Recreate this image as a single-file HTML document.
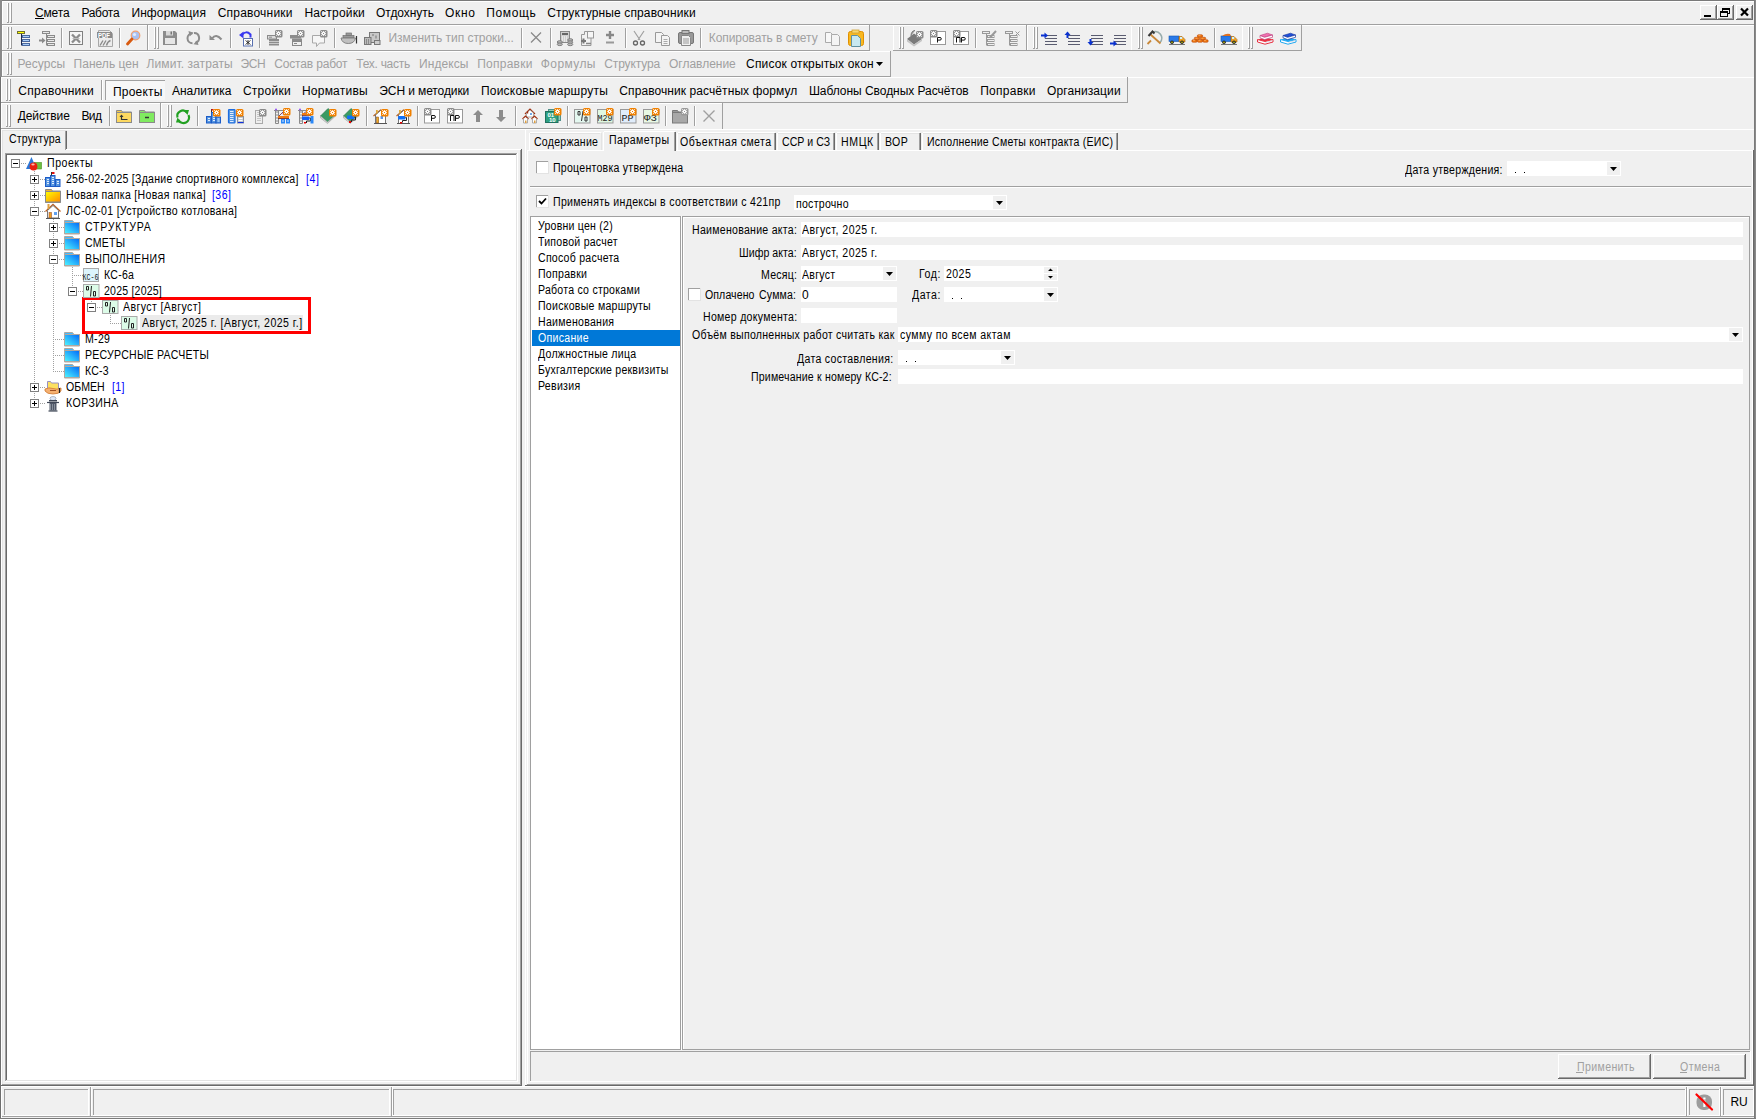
<!DOCTYPE html>
<html><head><meta charset="utf-8"><style>
html,body{margin:0;padding:0;}
body{width:1756px;height:1119px;position:relative;overflow:hidden;background:#f0f0f0;font-family:"Liberation Sans",sans-serif;}
body>div,body>span,body>svg{position:absolute;}
span{white-space:pre;line-height:1;}
</style></head><body>
<div style="left:0px;top:0px;width:1756px;height:1px;background:#7a7a7a;"></div>
<div style="left:0px;top:0px;width:2px;height:77px;background:#8a8a8a;"></div>
<div style="left:0px;top:77px;width:1px;height:1042px;background:#6e6e6e;"></div>
<div style="left:1px;top:77px;width:1px;height:1041px;background:#ffffff;"></div>
<div style="left:1754px;top:0px;width:1px;height:1119px;background:#7a7a7a;"></div>
<div style="left:1755px;top:0px;width:1px;height:1119px;background:#8a8a8a;"></div>
<div style="left:2px;top:1px;width:1752px;height:1px;background:#ffffff;"></div>
<div style="left:2px;top:1px;width:1px;height:76px;background:#ffffff;"></div>
<div style="left:0px;top:1118px;width:1756px;height:1px;background:#7a7a7a;"></div>
<div style="left:7px;top:3px;width:1px;height:19px;background:#ffffff;"></div>
<div style="left:8px;top:3px;width:1px;height:20px;background:#a0a0a0;"></div>
<div style="left:7px;top:22px;width:1px;height:1px;background:#a0a0a0;"></div>
<div style="left:10px;top:3px;width:1px;height:19px;background:#ffffff;"></div>
<div style="left:11px;top:3px;width:1px;height:20px;background:#a0a0a0;"></div>
<div style="left:10px;top:22px;width:1px;height:1px;background:#a0a0a0;"></div>
<div style="left:35px;top:18px;width:9px;height:1px;background:#000;"></div>
<div style="left:1700px;top:5px;width:17px;height:15px;background:#f0f0f0;"></div>
<div style="left:1700px;top:5px;width:17px;height:1px;background:#ffffff;"></div>
<div style="left:1700px;top:5px;width:1px;height:15px;background:#ffffff;"></div>
<div style="left:1700px;top:19px;width:17px;height:1px;background:#696969;"></div>
<div style="left:1716px;top:5px;width:1px;height:15px;background:#696969;"></div>
<div style="left:1701px;top:18px;width:15px;height:1px;background:#a0a0a0;"></div>
<div style="left:1715px;top:6px;width:1px;height:13px;background:#a0a0a0;"></div>
<div style="left:1717px;top:5px;width:17px;height:15px;background:#f0f0f0;"></div>
<div style="left:1717px;top:5px;width:17px;height:1px;background:#ffffff;"></div>
<div style="left:1717px;top:5px;width:1px;height:15px;background:#ffffff;"></div>
<div style="left:1717px;top:19px;width:17px;height:1px;background:#696969;"></div>
<div style="left:1733px;top:5px;width:1px;height:15px;background:#696969;"></div>
<div style="left:1718px;top:18px;width:15px;height:1px;background:#a0a0a0;"></div>
<div style="left:1732px;top:6px;width:1px;height:13px;background:#a0a0a0;"></div>
<div style="left:1736px;top:5px;width:17px;height:15px;background:#f0f0f0;"></div>
<div style="left:1736px;top:5px;width:17px;height:1px;background:#ffffff;"></div>
<div style="left:1736px;top:5px;width:1px;height:15px;background:#ffffff;"></div>
<div style="left:1736px;top:19px;width:17px;height:1px;background:#696969;"></div>
<div style="left:1752px;top:5px;width:1px;height:15px;background:#696969;"></div>
<div style="left:1737px;top:18px;width:15px;height:1px;background:#a0a0a0;"></div>
<div style="left:1751px;top:6px;width:1px;height:13px;background:#a0a0a0;"></div>
<div style="left:1704px;top:15px;width:7px;height:2px;background:#000;"></div>
<div style="left:1722px;top:8px;width:8px;height:6px;box-sizing:border-box;border:1px solid #000;border-top-width:2px"></div>
<div style="left:1720px;top:11px;width:8px;height:6px;box-sizing:border-box;border:1px solid #000;border-top-width:2px;background:#f0f0f0"></div>
<svg style="left:1739px;top:7px" width="11" height="10"><path d="M2 1.5l7 7M9 1.5l-7 7" stroke="#000" stroke-width="2.2"/></svg>
<div style="left:2px;top:24px;width:1752px;height:1px;background:#a0a0a0;"></div>
<div style="left:2px;top:25px;width:1752px;height:1px;background:#ffffff;"></div>
<div style="left:2px;top:25px;width:146px;height:1px;background:#ffffff;"></div>
<div style="left:2px;top:25px;width:1px;height:26px;background:#ffffff;"></div>
<div style="left:2px;top:50px;width:146px;height:1px;background:#a0a0a0;"></div>
<div style="left:147px;top:25px;width:1px;height:26px;background:#a0a0a0;"></div>
<div style="left:148px;top:25px;width:722px;height:1px;background:#ffffff;"></div>
<div style="left:148px;top:25px;width:1px;height:26px;background:#ffffff;"></div>
<div style="left:148px;top:50px;width:722px;height:1px;background:#a0a0a0;"></div>
<div style="left:869px;top:25px;width:1px;height:26px;background:#a0a0a0;"></div>
<div style="left:893px;top:25px;width:134px;height:1px;background:#ffffff;"></div>
<div style="left:893px;top:25px;width:1px;height:26px;background:#ffffff;"></div>
<div style="left:893px;top:50px;width:134px;height:1px;background:#a0a0a0;"></div>
<div style="left:1026px;top:25px;width:1px;height:26px;background:#a0a0a0;"></div>
<div style="left:1027px;top:25px;width:105px;height:1px;background:#ffffff;"></div>
<div style="left:1027px;top:25px;width:1px;height:26px;background:#ffffff;"></div>
<div style="left:1027px;top:50px;width:105px;height:1px;background:#a0a0a0;"></div>
<div style="left:1131px;top:25px;width:1px;height:26px;background:#a0a0a0;"></div>
<div style="left:1131px;top:25px;width:112px;height:1px;background:#ffffff;"></div>
<div style="left:1131px;top:25px;width:1px;height:26px;background:#ffffff;"></div>
<div style="left:1131px;top:50px;width:112px;height:1px;background:#a0a0a0;"></div>
<div style="left:1242px;top:25px;width:1px;height:26px;background:#a0a0a0;"></div>
<div style="left:1242px;top:25px;width:60px;height:1px;background:#ffffff;"></div>
<div style="left:1242px;top:25px;width:1px;height:26px;background:#ffffff;"></div>
<div style="left:1242px;top:50px;width:60px;height:1px;background:#a0a0a0;"></div>
<div style="left:1301px;top:25px;width:1px;height:26px;background:#a0a0a0;"></div>
<div style="left:7px;top:27px;width:1px;height:21px;background:#ffffff;"></div>
<div style="left:8px;top:27px;width:1px;height:22px;background:#a0a0a0;"></div>
<div style="left:7px;top:48px;width:1px;height:1px;background:#a0a0a0;"></div>
<div style="left:10px;top:27px;width:1px;height:21px;background:#ffffff;"></div>
<div style="left:11px;top:27px;width:1px;height:22px;background:#a0a0a0;"></div>
<div style="left:10px;top:48px;width:1px;height:1px;background:#a0a0a0;"></div>
<div style="left:154px;top:27px;width:1px;height:21px;background:#ffffff;"></div>
<div style="left:155px;top:27px;width:1px;height:22px;background:#a0a0a0;"></div>
<div style="left:154px;top:48px;width:1px;height:1px;background:#a0a0a0;"></div>
<div style="left:157px;top:27px;width:1px;height:21px;background:#ffffff;"></div>
<div style="left:158px;top:27px;width:1px;height:22px;background:#a0a0a0;"></div>
<div style="left:157px;top:48px;width:1px;height:1px;background:#a0a0a0;"></div>
<div style="left:899px;top:27px;width:1px;height:21px;background:#ffffff;"></div>
<div style="left:900px;top:27px;width:1px;height:22px;background:#a0a0a0;"></div>
<div style="left:899px;top:48px;width:1px;height:1px;background:#a0a0a0;"></div>
<div style="left:902px;top:27px;width:1px;height:21px;background:#ffffff;"></div>
<div style="left:903px;top:27px;width:1px;height:22px;background:#a0a0a0;"></div>
<div style="left:902px;top:48px;width:1px;height:1px;background:#a0a0a0;"></div>
<div style="left:1033px;top:27px;width:1px;height:21px;background:#ffffff;"></div>
<div style="left:1034px;top:27px;width:1px;height:22px;background:#a0a0a0;"></div>
<div style="left:1033px;top:48px;width:1px;height:1px;background:#a0a0a0;"></div>
<div style="left:1036px;top:27px;width:1px;height:21px;background:#ffffff;"></div>
<div style="left:1037px;top:27px;width:1px;height:22px;background:#a0a0a0;"></div>
<div style="left:1036px;top:48px;width:1px;height:1px;background:#a0a0a0;"></div>
<div style="left:1138px;top:27px;width:1px;height:21px;background:#ffffff;"></div>
<div style="left:1139px;top:27px;width:1px;height:22px;background:#a0a0a0;"></div>
<div style="left:1138px;top:48px;width:1px;height:1px;background:#a0a0a0;"></div>
<div style="left:1141px;top:27px;width:1px;height:21px;background:#ffffff;"></div>
<div style="left:1142px;top:27px;width:1px;height:22px;background:#a0a0a0;"></div>
<div style="left:1141px;top:48px;width:1px;height:1px;background:#a0a0a0;"></div>
<div style="left:1248px;top:27px;width:1px;height:21px;background:#ffffff;"></div>
<div style="left:1249px;top:27px;width:1px;height:22px;background:#a0a0a0;"></div>
<div style="left:1248px;top:48px;width:1px;height:1px;background:#a0a0a0;"></div>
<div style="left:1251px;top:27px;width:1px;height:21px;background:#ffffff;"></div>
<div style="left:1252px;top:27px;width:1px;height:22px;background:#a0a0a0;"></div>
<div style="left:1251px;top:48px;width:1px;height:1px;background:#a0a0a0;"></div>
<div style="left:2px;top:51px;width:889px;height:1px;background:#ffffff;"></div>
<div style="left:2px;top:51px;width:1px;height:26px;background:#ffffff;"></div>
<div style="left:2px;top:76px;width:889px;height:1px;background:#a0a0a0;"></div>
<div style="left:890px;top:51px;width:1px;height:26px;background:#a0a0a0;"></div>
<div style="left:7px;top:53px;width:1px;height:21px;background:#ffffff;"></div>
<div style="left:8px;top:53px;width:1px;height:22px;background:#a0a0a0;"></div>
<div style="left:7px;top:74px;width:1px;height:1px;background:#a0a0a0;"></div>
<div style="left:10px;top:53px;width:1px;height:21px;background:#ffffff;"></div>
<div style="left:11px;top:53px;width:1px;height:22px;background:#a0a0a0;"></div>
<div style="left:10px;top:74px;width:1px;height:1px;background:#a0a0a0;"></div>
<div style="left:1px;top:77px;width:1753px;height:1px;background:#ffffff;"></div>
<div style="left:1px;top:77px;width:1px;height:26px;background:#ffffff;"></div>
<div style="left:1px;top:102px;width:1127px;height:1px;background:#a0a0a0;"></div>
<div style="left:1127px;top:77px;width:1px;height:26px;background:#a0a0a0;"></div>
<div style="left:6px;top:79px;width:1px;height:21px;background:#ffffff;"></div>
<div style="left:7px;top:79px;width:1px;height:22px;background:#a0a0a0;"></div>
<div style="left:6px;top:100px;width:1px;height:1px;background:#a0a0a0;"></div>
<div style="left:9px;top:79px;width:1px;height:21px;background:#ffffff;"></div>
<div style="left:10px;top:79px;width:1px;height:22px;background:#a0a0a0;"></div>
<div style="left:9px;top:100px;width:1px;height:1px;background:#a0a0a0;"></div>
<div style="left:1px;top:103px;width:160px;height:1px;background:#ffffff;"></div>
<div style="left:1px;top:103px;width:1px;height:26px;background:#ffffff;"></div>
<div style="left:1px;top:128px;width:160px;height:1px;background:#a0a0a0;"></div>
<div style="left:160px;top:103px;width:1px;height:26px;background:#a0a0a0;"></div>
<div style="left:161px;top:103px;width:562px;height:1px;background:#ffffff;"></div>
<div style="left:161px;top:103px;width:1px;height:26px;background:#ffffff;"></div>
<div style="left:722px;top:103px;width:1px;height:26px;background:#a0a0a0;"></div>
<div style="left:161px;top:128px;width:493px;height:1px;background:#a0a0a0;"></div>
<div style="left:6px;top:105px;width:1px;height:21px;background:#ffffff;"></div>
<div style="left:7px;top:105px;width:1px;height:22px;background:#a0a0a0;"></div>
<div style="left:6px;top:126px;width:1px;height:1px;background:#a0a0a0;"></div>
<div style="left:9px;top:105px;width:1px;height:21px;background:#ffffff;"></div>
<div style="left:10px;top:105px;width:1px;height:22px;background:#a0a0a0;"></div>
<div style="left:9px;top:126px;width:1px;height:1px;background:#a0a0a0;"></div>
<div style="left:167px;top:105px;width:1px;height:21px;background:#ffffff;"></div>
<div style="left:168px;top:105px;width:1px;height:22px;background:#a0a0a0;"></div>
<div style="left:167px;top:126px;width:1px;height:1px;background:#a0a0a0;"></div>
<div style="left:170px;top:105px;width:1px;height:21px;background:#ffffff;"></div>
<div style="left:171px;top:105px;width:1px;height:22px;background:#a0a0a0;"></div>
<div style="left:170px;top:126px;width:1px;height:1px;background:#a0a0a0;"></div>
<div style="left:2px;top:129px;width:1752px;height:1px;background:#ffffff;"></div>
<div style="left:61px;top:28px;width:1px;height:20px;background:#a0a0a0;"></div>
<div style="left:62px;top:28px;width:1px;height:20px;background:#ffffff;"></div>
<div style="left:90px;top:28px;width:1px;height:20px;background:#a0a0a0;"></div>
<div style="left:91px;top:28px;width:1px;height:20px;background:#ffffff;"></div>
<div style="left:119px;top:28px;width:1px;height:20px;background:#a0a0a0;"></div>
<div style="left:120px;top:28px;width:1px;height:20px;background:#ffffff;"></div>
<div style="left:230px;top:28px;width:1px;height:20px;background:#a0a0a0;"></div>
<div style="left:231px;top:28px;width:1px;height:20px;background:#ffffff;"></div>
<div style="left:259px;top:28px;width:1px;height:20px;background:#a0a0a0;"></div>
<div style="left:260px;top:28px;width:1px;height:20px;background:#ffffff;"></div>
<div style="left:334px;top:28px;width:1px;height:20px;background:#a0a0a0;"></div>
<div style="left:335px;top:28px;width:1px;height:20px;background:#ffffff;"></div>
<div style="left:521px;top:28px;width:1px;height:20px;background:#a0a0a0;"></div>
<div style="left:522px;top:28px;width:1px;height:20px;background:#ffffff;"></div>
<div style="left:550px;top:28px;width:1px;height:20px;background:#a0a0a0;"></div>
<div style="left:551px;top:28px;width:1px;height:20px;background:#ffffff;"></div>
<div style="left:625px;top:28px;width:1px;height:20px;background:#a0a0a0;"></div>
<div style="left:626px;top:28px;width:1px;height:20px;background:#ffffff;"></div>
<div style="left:700px;top:28px;width:1px;height:20px;background:#a0a0a0;"></div>
<div style="left:701px;top:28px;width:1px;height:20px;background:#ffffff;"></div>
<div style="left:975px;top:28px;width:1px;height:20px;background:#a0a0a0;"></div>
<div style="left:976px;top:28px;width:1px;height:20px;background:#ffffff;"></div>
<div style="left:1214px;top:28px;width:1px;height:20px;background:#a0a0a0;"></div>
<div style="left:1215px;top:28px;width:1px;height:20px;background:#ffffff;"></div>
<div style="left:109px;top:106px;width:1px;height:20px;background:#a0a0a0;"></div>
<div style="left:110px;top:106px;width:1px;height:20px;background:#ffffff;"></div>
<div style="left:197px;top:106px;width:1px;height:20px;background:#a0a0a0;"></div>
<div style="left:198px;top:106px;width:1px;height:20px;background:#ffffff;"></div>
<div style="left:366px;top:106px;width:1px;height:20px;background:#a0a0a0;"></div>
<div style="left:367px;top:106px;width:1px;height:20px;background:#ffffff;"></div>
<div style="left:417px;top:106px;width:1px;height:20px;background:#a0a0a0;"></div>
<div style="left:418px;top:106px;width:1px;height:20px;background:#ffffff;"></div>
<div style="left:515px;top:106px;width:1px;height:20px;background:#a0a0a0;"></div>
<div style="left:516px;top:106px;width:1px;height:20px;background:#ffffff;"></div>
<div style="left:567px;top:106px;width:1px;height:20px;background:#a0a0a0;"></div>
<div style="left:568px;top:106px;width:1px;height:20px;background:#ffffff;"></div>
<div style="left:665px;top:106px;width:1px;height:20px;background:#a0a0a0;"></div>
<div style="left:666px;top:106px;width:1px;height:20px;background:#ffffff;"></div>
<div style="left:694px;top:106px;width:1px;height:20px;background:#a0a0a0;"></div>
<div style="left:695px;top:106px;width:1px;height:20px;background:#ffffff;"></div>
<div style="left:101px;top:80px;width:1px;height:20px;background:#a0a0a0;"></div>
<div style="left:102px;top:80px;width:1px;height:20px;background:#ffffff;"></div>
<svg style="left:876px;top:62px" width="8" height="5"><path d="M0 0h7l-3.5 4z" fill="#000"/></svg>
<div style="left:105px;top:80px;width:60px;height:20px;background:#f7f7f7;"></div>
<div style="left:105px;top:80px;width:60px;height:1px;background:#a0a0a0;"></div>
<div style="left:105px;top:80px;width:1px;height:20px;background:#a0a0a0;"></div>
<div style="left:2px;top:130px;width:65px;height:1px;background:#e3e3e3;"></div>
<div style="left:2px;top:131px;width:1px;height:19px;background:#e3e3e3;"></div>
<div style="left:66px;top:131px;width:1px;height:19px;background:#696969;"></div>
<div style="left:65px;top:131px;width:1px;height:19px;background:#a0a0a0;"></div>
<div style="left:66px;top:149px;width:456px;height:1px;background:#ffffff;"></div>
<div style="left:2px;top:150px;width:1px;height:934px;background:#e3e3e3;"></div>
<div style="left:521px;top:149px;width:1px;height:937px;background:#696969;"></div>
<div style="left:520px;top:150px;width:1px;height:935px;background:#a0a0a0;"></div>
<div style="left:1px;top:1085px;width:521px;height:1px;background:#696969;"></div>
<div style="left:2px;top:1084px;width:519px;height:1px;background:#a0a0a0;"></div>
<div style="left:5px;top:153px;width:513px;height:929px;background:#ffffff;"></div>
<div style="left:5px;top:153px;width:513px;height:1px;background:#a0a0a0;"></div>
<div style="left:5px;top:153px;width:1px;height:929px;background:#a0a0a0;"></div>
<div style="left:6px;top:154px;width:511px;height:1px;background:#696969;"></div>
<div style="left:6px;top:154px;width:1px;height:927px;background:#696969;"></div>
<div style="left:5px;top:1081px;width:513px;height:1px;background:#ffffff;"></div>
<div style="left:517px;top:153px;width:1px;height:929px;background:#ffffff;"></div>
<div style="left:6px;top:1080px;width:511px;height:1px;background:#e3e3e3;"></div>
<div style="left:516px;top:154px;width:1px;height:927px;background:#e3e3e3;"></div>
<div style="left:525px;top:129px;width:1px;height:957px;background:#ffffff;"></div>
<div style="left:1753px;top:150px;width:1px;height:936px;background:#696969;"></div>
<div style="left:525px;top:1085px;width:1229px;height:1px;background:#696969;"></div>
<div style="left:527px;top:150px;width:1225px;height:1px;background:#ffffff;"></div>
<div style="left:527px;top:150px;width:1px;height:935px;background:#ffffff;"></div>
<div style="left:1752px;top:150px;width:1px;height:935px;background:#ffffff;"></div>
<div style="left:527px;top:1084px;width:1226px;height:1px;background:#a0a0a0;"></div>
<div style="left:530px;top:132px;width:71px;height:1px;background:#ffffff;"></div>
<div style="left:530px;top:133px;width:70px;height:1px;background:#e3e3e3;"></div>
<div style="left:529px;top:133px;width:1px;height:18px;background:#ffffff;"></div>
<div style="left:601px;top:133px;width:1px;height:17px;background:#e3e3e3;"></div>
<div style="left:603px;top:131px;width:73px;height:21px;background:#f0f0f0;"></div>
<div style="left:604px;top:131px;width:71px;height:1px;background:#ffffff;"></div>
<div style="left:603px;top:132px;width:1px;height:19px;background:#ffffff;"></div>
<div style="left:675px;top:132px;width:1px;height:19px;background:#696969;"></div>
<div style="left:674px;top:132px;width:1px;height:19px;background:#a0a0a0;"></div>
<div style="left:678px;top:132px;width:97px;height:1px;background:#ffffff;"></div>
<div style="left:678px;top:133px;width:96px;height:1px;background:#e3e3e3;"></div>
<div style="left:677px;top:133px;width:1px;height:18px;background:#ffffff;"></div>
<div style="left:775px;top:133px;width:1px;height:17px;background:#696969;"></div>
<div style="left:774px;top:133px;width:1px;height:17px;background:#a0a0a0;"></div>
<div style="left:778px;top:132px;width:56px;height:1px;background:#ffffff;"></div>
<div style="left:778px;top:133px;width:55px;height:1px;background:#e3e3e3;"></div>
<div style="left:777px;top:133px;width:1px;height:18px;background:#ffffff;"></div>
<div style="left:834px;top:133px;width:1px;height:17px;background:#696969;"></div>
<div style="left:833px;top:133px;width:1px;height:17px;background:#a0a0a0;"></div>
<div style="left:837px;top:132px;width:41px;height:1px;background:#ffffff;"></div>
<div style="left:837px;top:133px;width:40px;height:1px;background:#e3e3e3;"></div>
<div style="left:836px;top:133px;width:1px;height:18px;background:#ffffff;"></div>
<div style="left:878px;top:133px;width:1px;height:17px;background:#696969;"></div>
<div style="left:877px;top:133px;width:1px;height:17px;background:#a0a0a0;"></div>
<div style="left:881px;top:132px;width:39px;height:1px;background:#ffffff;"></div>
<div style="left:881px;top:133px;width:38px;height:1px;background:#e3e3e3;"></div>
<div style="left:880px;top:133px;width:1px;height:18px;background:#ffffff;"></div>
<div style="left:920px;top:133px;width:1px;height:17px;background:#696969;"></div>
<div style="left:919px;top:133px;width:1px;height:17px;background:#a0a0a0;"></div>
<div style="left:923px;top:132px;width:194px;height:1px;background:#ffffff;"></div>
<div style="left:923px;top:133px;width:193px;height:1px;background:#e3e3e3;"></div>
<div style="left:922px;top:133px;width:1px;height:18px;background:#ffffff;"></div>
<div style="left:1117px;top:133px;width:1px;height:17px;background:#696969;"></div>
<div style="left:1116px;top:133px;width:1px;height:17px;background:#a0a0a0;"></div>
<div style="left:536px;top:161px;width:13px;height:13px;background:#ffffff;"></div>
<div style="left:536px;top:161px;width:13px;height:1px;background:#a0a0a0;"></div>
<div style="left:536px;top:161px;width:1px;height:13px;background:#a0a0a0;"></div>
<div style="left:536px;top:173px;width:13px;height:1px;background:#e3e3e3;"></div>
<div style="left:548px;top:161px;width:1px;height:13px;background:#e3e3e3;"></div>
<div style="left:1507px;top:161px;width:114px;height:15px;background:#ffffff;"></div>
<div style="left:1607px;top:162px;width:13px;height:13px;background:#f0f0f0;"></div>
<svg style="left:1610px;top:167px" width="7" height="4"><path d="M0 0h7l-3.5 4z" fill="#000"/></svg>
<div style="left:1515px;top:172px;width:1px;height:1px;background:#000;"></div>
<div style="left:1524px;top:172px;width:1px;height:1px;background:#000;"></div>
<div style="left:530px;top:186px;width:1221px;height:1px;background:#a0a0a0;"></div>
<div style="left:530px;top:187px;width:1221px;height:1px;background:#ffffff;"></div>
<div style="left:536px;top:195px;width:13px;height:13px;background:#ffffff;"></div>
<div style="left:536px;top:195px;width:13px;height:1px;background:#a0a0a0;"></div>
<div style="left:536px;top:195px;width:1px;height:13px;background:#a0a0a0;"></div>
<div style="left:536px;top:207px;width:13px;height:1px;background:#e3e3e3;"></div>
<div style="left:548px;top:195px;width:1px;height:13px;background:#e3e3e3;"></div>
<svg style="left:538px;top:197px" width="9" height="9"><path d="M1 4l2.5 2.5L8 1.5" fill="none" stroke="#000" stroke-width="1.8"/></svg>
<div style="left:794px;top:195px;width:213px;height:15px;background:#ffffff;"></div>
<div style="left:993px;top:196px;width:13px;height:13px;background:#f0f0f0;"></div>
<svg style="left:996px;top:201px" width="7" height="4"><path d="M0 0h7l-3.5 4z" fill="#000"/></svg>
<div style="left:530px;top:216px;width:151px;height:834px;background:#ffffff;"></div>
<div style="left:530px;top:216px;width:151px;height:1px;background:#a0a0a0;"></div>
<div style="left:530px;top:216px;width:1px;height:834px;background:#a0a0a0;"></div>
<div style="left:530px;top:1049px;width:151px;height:1px;background:#a0a0a0;"></div>
<div style="left:680px;top:216px;width:1px;height:834px;background:#a0a0a0;"></div>
<div style="left:532px;top:330px;width:148px;height:16px;background:#0078d7;"></div>
<div style="left:681px;top:216px;width:1px;height:834px;background:#ffffff;"></div>
<div style="left:682px;top:216px;width:1068px;height:1px;background:#a0a0a0;"></div>
<div style="left:682px;top:216px;width:1px;height:834px;background:#a0a0a0;"></div>
<div style="left:682px;top:1049px;width:1068px;height:1px;background:#a0a0a0;"></div>
<div style="left:1749px;top:216px;width:1px;height:834px;background:#a0a0a0;"></div>
<div style="left:683px;top:217px;width:1066px;height:1px;background:#ffffff;"></div>
<div style="left:683px;top:217px;width:1px;height:832px;background:#ffffff;"></div>
<div style="left:801px;top:222px;width:942px;height:15px;background:#ffffff;"></div>
<div style="left:801px;top:245px;width:942px;height:15px;background:#ffffff;"></div>
<div style="left:801px;top:266px;width:96px;height:15px;background:#ffffff;"></div>
<div style="left:883px;top:267px;width:13px;height:13px;background:#f0f0f0;"></div>
<svg style="left:886px;top:272px" width="7" height="4"><path d="M0 0h7l-3.5 4z" fill="#000"/></svg>
<div style="left:944px;top:266px;width:114px;height:15px;background:#ffffff;"></div>
<div style="left:1044px;top:267px;width:13px;height:6px;background:#f0f0f0;"></div>
<div style="left:1044px;top:274px;width:13px;height:6px;background:#f0f0f0;"></div>
<svg style="left:1048px;top:268px" width="5" height="11"><path d="M0 3h5L2.5 0.5zM0 8h5L2.5 10.5z" fill="#000"/></svg>
<div style="left:688px;top:288px;width:13px;height:13px;background:#ffffff;"></div>
<div style="left:688px;top:288px;width:13px;height:1px;background:#a0a0a0;"></div>
<div style="left:688px;top:288px;width:1px;height:13px;background:#a0a0a0;"></div>
<div style="left:688px;top:300px;width:13px;height:1px;background:#e3e3e3;"></div>
<div style="left:700px;top:288px;width:1px;height:13px;background:#e3e3e3;"></div>
<div style="left:801px;top:287px;width:96px;height:15px;background:#ffffff;"></div>
<div style="left:944px;top:287px;width:114px;height:15px;background:#ffffff;"></div>
<div style="left:1044px;top:288px;width:13px;height:13px;background:#f0f0f0;"></div>
<svg style="left:1047px;top:293px" width="7" height="4"><path d="M0 0h7l-3.5 4z" fill="#000"/></svg>
<div style="left:952px;top:298px;width:1px;height:1px;background:#000;"></div>
<div style="left:961px;top:298px;width:1px;height:1px;background:#000;"></div>
<div style="left:801px;top:308px;width:96px;height:15px;background:#ffffff;"></div>
<div style="left:898px;top:327px;width:845px;height:15px;background:#ffffff;"></div>
<div style="left:1729px;top:328px;width:13px;height:13px;background:#f0f0f0;"></div>
<svg style="left:1732px;top:333px" width="7" height="4"><path d="M0 0h7l-3.5 4z" fill="#000"/></svg>
<div style="left:898px;top:350px;width:117px;height:15px;background:#ffffff;"></div>
<div style="left:1001px;top:351px;width:13px;height:13px;background:#f0f0f0;"></div>
<svg style="left:1004px;top:356px" width="7" height="4"><path d="M0 0h7l-3.5 4z" fill="#000"/></svg>
<div style="left:906px;top:361px;width:1px;height:1px;background:#000;"></div>
<div style="left:915px;top:361px;width:1px;height:1px;background:#000;"></div>
<div style="left:898px;top:369px;width:845px;height:15px;background:#ffffff;"></div>
<div style="left:530px;top:1051px;width:1221px;height:1px;background:#a0a0a0;"></div>
<div style="left:530px;top:1051px;width:1px;height:30px;background:#a0a0a0;"></div>
<div style="left:530px;top:1081px;width:1221px;height:1px;background:#ffffff;"></div>
<div style="left:1750px;top:1051px;width:1px;height:31px;background:#ffffff;"></div>
<div style="left:1558px;top:1054px;width:93px;height:1px;background:#ffffff;"></div>
<div style="left:1558px;top:1054px;width:1px;height:25px;background:#ffffff;"></div>
<div style="left:1558px;top:1078px;width:93px;height:1px;background:#696969;"></div>
<div style="left:1650px;top:1054px;width:1px;height:25px;background:#696969;"></div>
<div style="left:1559px;top:1077px;width:91px;height:1px;background:#a0a0a0;"></div>
<div style="left:1649px;top:1055px;width:1px;height:23px;background:#a0a0a0;"></div>
<div style="left:1653px;top:1054px;width:93px;height:1px;background:#ffffff;"></div>
<div style="left:1653px;top:1054px;width:1px;height:25px;background:#ffffff;"></div>
<div style="left:1653px;top:1078px;width:93px;height:1px;background:#696969;"></div>
<div style="left:1745px;top:1054px;width:1px;height:25px;background:#696969;"></div>
<div style="left:1654px;top:1077px;width:91px;height:1px;background:#a0a0a0;"></div>
<div style="left:1744px;top:1055px;width:1px;height:23px;background:#a0a0a0;"></div>
<div style="left:1576px;top:1072px;width:7px;height:1px;background:#a0a0a0;"></div>
<div style="left:1680px;top:1072px;width:7px;height:1px;background:#a0a0a0;"></div>
<div style="left:2px;top:1086px;width:1752px;height:1px;background:#ffffff;"></div>
<div style="left:4px;top:1089px;width:85px;height:1px;background:#a0a0a0;"></div>
<div style="left:4px;top:1089px;width:1px;height:26px;background:#a0a0a0;"></div>
<div style="left:4px;top:1115px;width:85px;height:1px;background:#ffffff;"></div>
<div style="left:88px;top:1089px;width:1px;height:27px;background:#ffffff;"></div>
<div style="left:93px;top:1089px;width:297px;height:1px;background:#a0a0a0;"></div>
<div style="left:93px;top:1089px;width:1px;height:26px;background:#a0a0a0;"></div>
<div style="left:93px;top:1115px;width:297px;height:1px;background:#ffffff;"></div>
<div style="left:389px;top:1089px;width:1px;height:27px;background:#ffffff;"></div>
<div style="left:393px;top:1089px;width:1293px;height:1px;background:#a0a0a0;"></div>
<div style="left:393px;top:1089px;width:1px;height:26px;background:#a0a0a0;"></div>
<div style="left:393px;top:1115px;width:1293px;height:1px;background:#ffffff;"></div>
<div style="left:1685px;top:1089px;width:1px;height:27px;background:#ffffff;"></div>
<div style="left:1689px;top:1089px;width:31px;height:1px;background:#a0a0a0;"></div>
<div style="left:1689px;top:1089px;width:1px;height:26px;background:#a0a0a0;"></div>
<div style="left:1689px;top:1115px;width:31px;height:1px;background:#ffffff;"></div>
<div style="left:1719px;top:1089px;width:1px;height:27px;background:#ffffff;"></div>
<div style="left:1723px;top:1089px;width:31px;height:1px;background:#a0a0a0;"></div>
<div style="left:1723px;top:1089px;width:1px;height:26px;background:#a0a0a0;"></div>
<div style="left:1723px;top:1115px;width:31px;height:1px;background:#ffffff;"></div>
<div style="left:1753px;top:1089px;width:1px;height:27px;background:#ffffff;"></div>
<div style="left:90px;top:1087px;width:1px;height:30px;background:#a0a0a0;"></div>
<div style="left:91px;top:1087px;width:1px;height:30px;background:#ffffff;"></div>
<div style="left:391px;top:1087px;width:1px;height:30px;background:#a0a0a0;"></div>
<div style="left:392px;top:1087px;width:1px;height:30px;background:#ffffff;"></div>
<div style="left:1686px;top:1087px;width:1px;height:30px;background:#a0a0a0;"></div>
<div style="left:1687px;top:1087px;width:1px;height:30px;background:#ffffff;"></div>
<div style="left:1720px;top:1087px;width:1px;height:30px;background:#a0a0a0;"></div>
<div style="left:1721px;top:1087px;width:1px;height:30px;background:#ffffff;"></div>
<div style="left:2px;top:1116px;width:1752px;height:1px;background:#a0a0a0;"></div>
<svg style="left:1695px;top:1093px" width="19" height="18"><rect x="1.5" y="1.5" width="15.5" height="15.5" rx="7" fill="#9c9c9c"/><rect x="8.3" y="4.5" width="2.2" height="2" fill="#fff"/><rect x="8.3" y="7.5" width="2.2" height="6.5" fill="#fff"/><path d="M1.5 1.5L17 16.5" stroke="#f00" stroke-width="2.2" stroke-linecap="round"/></svg>
<div style="left:34px;top:171px;width:1px;height:233px;background:repeating-linear-gradient(to bottom,#a0a0a0 0 1px,transparent 1px 2px)"></div>
<div style="left:53px;top:219px;width:1px;height:153px;background:repeating-linear-gradient(to bottom,#a0a0a0 0 1px,transparent 1px 2px)"></div>
<div style="left:72px;top:267px;width:1px;height:25px;background:repeating-linear-gradient(to bottom,#a0a0a0 0 1px,transparent 1px 2px)"></div>
<div style="left:91px;top:299px;width:1px;height:9px;background:repeating-linear-gradient(to bottom,#a0a0a0 0 1px,transparent 1px 2px)"></div>
<div style="left:110px;top:315px;width:1px;height:9px;background:repeating-linear-gradient(to bottom,#a0a0a0 0 1px,transparent 1px 2px)"></div>
<div style="left:21px;top:163px;width:5px;height:1px;background:repeating-linear-gradient(to right,#a0a0a0 0 1px,transparent 1px 2px)"></div>
<div style="left:11px;top:159px;width:9px;height:9px;background:#ffffff;"></div>
<div style="left:11px;top:159px;width:9px;height:1px;background:#808080;"></div>
<div style="left:11px;top:159px;width:1px;height:9px;background:#808080;"></div>
<div style="left:11px;top:167px;width:9px;height:1px;background:#808080;"></div>
<div style="left:19px;top:159px;width:1px;height:9px;background:#808080;"></div>
<div style="left:13px;top:163px;width:5px;height:1px;background:#000;"></div>
<div style="left:40px;top:179px;width:5px;height:1px;background:repeating-linear-gradient(to right,#a0a0a0 0 1px,transparent 1px 2px)"></div>
<div style="left:30px;top:175px;width:9px;height:9px;background:#ffffff;"></div>
<div style="left:30px;top:175px;width:9px;height:1px;background:#808080;"></div>
<div style="left:30px;top:175px;width:1px;height:9px;background:#808080;"></div>
<div style="left:30px;top:183px;width:9px;height:1px;background:#808080;"></div>
<div style="left:38px;top:175px;width:1px;height:9px;background:#808080;"></div>
<div style="left:32px;top:179px;width:5px;height:1px;background:#000;"></div>
<div style="left:34px;top:177px;width:1px;height:5px;background:#000;"></div>
<div style="left:40px;top:195px;width:5px;height:1px;background:repeating-linear-gradient(to right,#a0a0a0 0 1px,transparent 1px 2px)"></div>
<div style="left:30px;top:191px;width:9px;height:9px;background:#ffffff;"></div>
<div style="left:30px;top:191px;width:9px;height:1px;background:#808080;"></div>
<div style="left:30px;top:191px;width:1px;height:9px;background:#808080;"></div>
<div style="left:30px;top:199px;width:9px;height:1px;background:#808080;"></div>
<div style="left:38px;top:191px;width:1px;height:9px;background:#808080;"></div>
<div style="left:32px;top:195px;width:5px;height:1px;background:#000;"></div>
<div style="left:34px;top:193px;width:1px;height:5px;background:#000;"></div>
<div style="left:40px;top:211px;width:5px;height:1px;background:repeating-linear-gradient(to right,#a0a0a0 0 1px,transparent 1px 2px)"></div>
<div style="left:30px;top:207px;width:9px;height:9px;background:#ffffff;"></div>
<div style="left:30px;top:207px;width:9px;height:1px;background:#808080;"></div>
<div style="left:30px;top:207px;width:1px;height:9px;background:#808080;"></div>
<div style="left:30px;top:215px;width:9px;height:1px;background:#808080;"></div>
<div style="left:38px;top:207px;width:1px;height:9px;background:#808080;"></div>
<div style="left:32px;top:211px;width:5px;height:1px;background:#000;"></div>
<div style="left:59px;top:227px;width:5px;height:1px;background:repeating-linear-gradient(to right,#a0a0a0 0 1px,transparent 1px 2px)"></div>
<div style="left:49px;top:223px;width:9px;height:9px;background:#ffffff;"></div>
<div style="left:49px;top:223px;width:9px;height:1px;background:#808080;"></div>
<div style="left:49px;top:223px;width:1px;height:9px;background:#808080;"></div>
<div style="left:49px;top:231px;width:9px;height:1px;background:#808080;"></div>
<div style="left:57px;top:223px;width:1px;height:9px;background:#808080;"></div>
<div style="left:51px;top:227px;width:5px;height:1px;background:#000;"></div>
<div style="left:53px;top:225px;width:1px;height:5px;background:#000;"></div>
<div style="left:59px;top:243px;width:5px;height:1px;background:repeating-linear-gradient(to right,#a0a0a0 0 1px,transparent 1px 2px)"></div>
<div style="left:49px;top:239px;width:9px;height:9px;background:#ffffff;"></div>
<div style="left:49px;top:239px;width:9px;height:1px;background:#808080;"></div>
<div style="left:49px;top:239px;width:1px;height:9px;background:#808080;"></div>
<div style="left:49px;top:247px;width:9px;height:1px;background:#808080;"></div>
<div style="left:57px;top:239px;width:1px;height:9px;background:#808080;"></div>
<div style="left:51px;top:243px;width:5px;height:1px;background:#000;"></div>
<div style="left:53px;top:241px;width:1px;height:5px;background:#000;"></div>
<div style="left:59px;top:259px;width:5px;height:1px;background:repeating-linear-gradient(to right,#a0a0a0 0 1px,transparent 1px 2px)"></div>
<div style="left:49px;top:255px;width:9px;height:9px;background:#ffffff;"></div>
<div style="left:49px;top:255px;width:9px;height:1px;background:#808080;"></div>
<div style="left:49px;top:255px;width:1px;height:9px;background:#808080;"></div>
<div style="left:49px;top:263px;width:9px;height:1px;background:#808080;"></div>
<div style="left:57px;top:255px;width:1px;height:9px;background:#808080;"></div>
<div style="left:51px;top:259px;width:5px;height:1px;background:#000;"></div>
<div style="left:74px;top:275px;width:9px;height:1px;background:repeating-linear-gradient(to right,#a0a0a0 0 1px,transparent 1px 2px)"></div>
<div style="left:78px;top:291px;width:5px;height:1px;background:repeating-linear-gradient(to right,#a0a0a0 0 1px,transparent 1px 2px)"></div>
<div style="left:68px;top:287px;width:9px;height:9px;background:#ffffff;"></div>
<div style="left:68px;top:287px;width:9px;height:1px;background:#808080;"></div>
<div style="left:68px;top:287px;width:1px;height:9px;background:#808080;"></div>
<div style="left:68px;top:295px;width:9px;height:1px;background:#808080;"></div>
<div style="left:76px;top:287px;width:1px;height:9px;background:#808080;"></div>
<div style="left:70px;top:291px;width:5px;height:1px;background:#000;"></div>
<div style="left:97px;top:307px;width:5px;height:1px;background:repeating-linear-gradient(to right,#a0a0a0 0 1px,transparent 1px 2px)"></div>
<div style="left:87px;top:303px;width:9px;height:9px;background:#ffffff;"></div>
<div style="left:87px;top:303px;width:9px;height:1px;background:#808080;"></div>
<div style="left:87px;top:303px;width:1px;height:9px;background:#808080;"></div>
<div style="left:87px;top:311px;width:9px;height:1px;background:#808080;"></div>
<div style="left:95px;top:303px;width:1px;height:9px;background:#808080;"></div>
<div style="left:89px;top:307px;width:5px;height:1px;background:#000;"></div>
<div style="left:112px;top:323px;width:9px;height:1px;background:repeating-linear-gradient(to right,#a0a0a0 0 1px,transparent 1px 2px)"></div>
<div style="left:140px;top:315px;width:163px;height:15px;background:#ebebeb;"></div>
<div style="left:55px;top:339px;width:9px;height:1px;background:repeating-linear-gradient(to right,#a0a0a0 0 1px,transparent 1px 2px)"></div>
<div style="left:55px;top:355px;width:9px;height:1px;background:repeating-linear-gradient(to right,#a0a0a0 0 1px,transparent 1px 2px)"></div>
<div style="left:55px;top:371px;width:9px;height:1px;background:repeating-linear-gradient(to right,#a0a0a0 0 1px,transparent 1px 2px)"></div>
<div style="left:40px;top:387px;width:5px;height:1px;background:repeating-linear-gradient(to right,#a0a0a0 0 1px,transparent 1px 2px)"></div>
<div style="left:30px;top:383px;width:9px;height:9px;background:#ffffff;"></div>
<div style="left:30px;top:383px;width:9px;height:1px;background:#808080;"></div>
<div style="left:30px;top:383px;width:1px;height:9px;background:#808080;"></div>
<div style="left:30px;top:391px;width:9px;height:1px;background:#808080;"></div>
<div style="left:38px;top:383px;width:1px;height:9px;background:#808080;"></div>
<div style="left:32px;top:387px;width:5px;height:1px;background:#000;"></div>
<div style="left:34px;top:385px;width:1px;height:5px;background:#000;"></div>
<div style="left:40px;top:403px;width:5px;height:1px;background:repeating-linear-gradient(to right,#a0a0a0 0 1px,transparent 1px 2px)"></div>
<div style="left:30px;top:399px;width:9px;height:9px;background:#ffffff;"></div>
<div style="left:30px;top:399px;width:9px;height:1px;background:#808080;"></div>
<div style="left:30px;top:399px;width:1px;height:9px;background:#808080;"></div>
<div style="left:30px;top:407px;width:9px;height:1px;background:#808080;"></div>
<div style="left:38px;top:399px;width:1px;height:9px;background:#808080;"></div>
<div style="left:32px;top:403px;width:5px;height:1px;background:#000;"></div>
<div style="left:34px;top:401px;width:1px;height:5px;background:#000;"></div>
<div style="left:82px;top:297px;width:229px;height:37px;box-sizing:border-box;border:3.5px solid #ff0000"></div>
<svg style="left:0;top:0" width="1756" height="130" viewBox="0 0 1756 130"><rect x="17.5" y="31.5" width="7" height="2" fill="#ffff00" stroke="#707030"/><path d="M21.5 34v11.5M21.5 36.5h1M21.5 40.5h1M21.5 44.5h1" stroke="#1c2850" fill="none"/><g fill="#a8ccf8" stroke="#4a68a0"><rect x="22.5" y="35.5" width="7" height="2"/><rect x="22.5" y="39.5" width="7" height="2"/><rect x="22.5" y="43.5" width="7" height="2"/></g><rect x="42.5" y="31.5" width="7" height="2" fill="#e8e8e8" stroke="#8a8a8a"/><path d="M46.5 34v11.5M46.5 36.5h1M46.5 40.5h1M46.5 44.5h1" stroke="#8a8a8a" fill="none"/><g fill="#e8e8e8" stroke="#8a8a8a"><rect x="47.5" y="35.5" width="7" height="2"/><rect x="47.5" y="39.5" width="7" height="2"/><rect x="47.5" y="43.5" width="7" height="2"/></g><path d="M39 40.5h4" stroke="#8a8a8a" stroke-width="2"/><path d="M42 37.5l3.5 3-3.5 3z" fill="#8a8a8a"/><rect x="69.5" y="31.5" width="13" height="13" fill="#f6f6f6" stroke="#808080"/><path d="M72 34.5l8 8M80 34.5l-8 8" stroke="#8c8c8c" stroke-width="2.4"/><path d="M72.5 38.5h7" stroke="#bbb" stroke-width="1"/><path d="M98.5 30.5h11l3 3v13h-14z" fill="#ececec" stroke="#a8a8a8"/><rect x="97" y="32" width="15" height="6" fill="#8a8a8a"/><text x="98" y="37.6" font-size="6.5" font-family="Liberation Sans" font-weight="bold" fill="#fff" textLength="12" lengthAdjust="spacingAndGlyphs">PDF</text><path d="M100 45.5l3-5M103 45.5l3-5M106.5 45.5q1-4 4-5" stroke="#8a8a8a" stroke-width="1.4" fill="none"/><circle cx="135.5" cy="35.5" r="4.3" fill="#a8c0f0" stroke="#f0a070" stroke-width="1.2"/><circle cx="134.5" cy="34.5" r="1.6" fill="#e0ecff"/><path d="M132 39l-4.5 5" stroke="#d85a10" stroke-width="2.8" stroke-linecap="round"/><path d="M163 31h12l2 2v12h-14z" fill="#8c8c8c"/><rect x="166" y="31" width="7" height="4.5" fill="#d8d8d8"/><rect x="170.5" y="31.5" width="1.5" height="3" fill="#777"/><rect x="165" y="38" width="10" height="6" fill="#e6e6e6"/><path d="M192.5 33.2A5 5 0 0 0 192.5 43.2" fill="none" stroke="#8c8c8c" stroke-width="2"/><path d="M194 33A5 5 0 0 1 195.5 42.8" fill="none" stroke="#8c8c8c" stroke-width="2"/><path d="M188.5 31l5 1.8-3.8 3.6z" fill="#8c8c8c"/><path d="M198.5 45l-5-0.8 3.6-4z" fill="#8c8c8c"/><path d="M212 38.5Q216 33 221.5 39.5" fill="none" stroke="#8c8c8c" stroke-width="2"/><path d="M209.5 35l5.5 5h-5.5z" fill="#8c8c8c"/><path d="M242 35Q246 30 250.5 34.5v3" fill="none" stroke="#3838f0" stroke-width="2"/><path d="M239 35l4.5-3.5v7z" fill="#3838f0"/><rect x="243.5" y="38.5" width="9" height="7.5" fill="#fff" stroke="#5870b0"/><path d="M245.5 40.5l5 4M250.5 40.5l-5 4M248 40v5" stroke="#111" stroke-width="0.8"/><rect x="267.5" y="35.5" width="9" height="3.5" fill="#ddd" stroke="#8a8a8a"/><path d="M269 37.2h3" stroke="#8a8a8a"/><rect x="269" y="39" width="10" height="6.5" fill="#8c8c8c"/><path d="M269 41.5h10M269 43.5h10" stroke="#c8c8c8"/><rect x="275" y="30" width="7.5" height="7.5" rx="1.6" fill="#8c8c8c"/><path d="M278.5 31L281 33.5L278.5 36L276 33.5z" fill="#fff"/><rect x="278" y="33" width="1" height="1" fill="#8c8c8c"/><g fill="#fff" opacity="0.7"><rect x="276" y="31" width="1" height="1"/><rect x="280" y="31" width="1" height="1"/><rect x="276" y="35" width="1" height="1"/><rect x="280" y="35" width="1" height="1"/></g><rect x="290" y="35" width="11" height="3.5" fill="#8c8c8c"/><rect x="292" y="38.5" width="10" height="3" fill="#8c8c8c"/><rect x="292.5" y="41.5" width="9" height="4" fill="#eee" stroke="#888"/><path d="M294 43.5h3" stroke="#888"/><rect x="297" y="30" width="7.5" height="7.5" rx="1.6" fill="#8c8c8c"/><path d="M300.5 31L303 33.5L300.5 36L298 33.5z" fill="#fff"/><rect x="300" y="33" width="1" height="1" fill="#8c8c8c"/><g fill="#fff" opacity="0.7"><rect x="298" y="31" width="1" height="1"/><rect x="302" y="31" width="1" height="1"/><rect x="298" y="35" width="1" height="1"/><rect x="302" y="35" width="1" height="1"/></g><path d="M312.5 35.5h12v7.5h-5l-3 3.5v-3.5h-4z" fill="#f6f6f6" stroke="#a8a8a8"/><rect x="320" y="30" width="7.5" height="7.5" rx="1.6" fill="#8c8c8c"/><path d="M323.5 31L326 33.5L323.5 36L321 33.5z" fill="#fff"/><rect x="323" y="33" width="1" height="1" fill="#8c8c8c"/><g fill="#fff" opacity="0.7"><rect x="321" y="31" width="1" height="1"/><rect x="325" y="31" width="1" height="1"/><rect x="321" y="35" width="1" height="1"/><rect x="325" y="35" width="1" height="1"/></g><rect x="346" y="33" width="5.5" height="2.5" fill="#9a9a9a" stroke="#707070" stroke-width="0.7"/><rect x="343" y="35.5" width="11" height="2.5" fill="#9a9a9a" stroke="#707070" stroke-width="0.7"/><path d="M341 38h14.5q-1 5.5-7.2 5.5t-7.3-5.5z" fill="#c0c0c0" stroke="#7a7a7a" stroke-width="0.9"/><path d="M356.5 36v7.5" stroke="#333" stroke-width="1.2"/><rect x="369.5" y="32.5" width="10" height="10" fill="#c8c8c8" stroke="#777"/><rect x="364.5" y="37.5" width="6.5" height="7" fill="#bbb" stroke="#777"/><path d="M366.5 39v5M368.5 39v5" stroke="#8a8a8a"/><rect x="374.5" y="40.5" width="5.5" height="4" fill="#ccc" stroke="#777"/><path d="M372 35h2M376 35.5v3" stroke="#777"/><path d="M531 32.5l10 10M541 32.5l-10 10" stroke="#8a8a8a" stroke-width="1.3"/><rect x="560.5" y="31.5" width="9" height="11" fill="#cfcfcf" stroke="#888"/><rect x="562" y="33" width="6" height="2" fill="#666"/><path d="M562 37h6M562 39h6M562 41h6" stroke="#fff" stroke-dasharray="1 1"/><g fill="#bbb" stroke="#777" stroke-width="0.9"><ellipse cx="559.8" cy="42" rx="2.6" ry="1.3"/><ellipse cx="559.8" cy="44.3" rx="2.6" ry="1.3"/><ellipse cx="570.2" cy="40" rx="2.6" ry="1.3"/><ellipse cx="570.2" cy="42.2" rx="2.6" ry="1.3"/><ellipse cx="570.2" cy="44.4" rx="2.6" ry="1.3"/></g><path d="M581.5 34.5h3v-3h6.5v14h-9.5z" fill="#f2f2f2" stroke="#999"/><rect x="587.5" y="31.5" width="6" height="6.5" fill="#f6f6f6" stroke="#999"/><path d="M581 41h5M583.5 38.5v5" stroke="#777" stroke-width="2"/><path d="M586 43.5h5" stroke="#888" stroke-width="1.5"/><path d="M606 35h8M610 31v8" stroke="#888" stroke-width="2.4"/><path d="M606 42.5h8" stroke="#999" stroke-width="2"/><path d="M634 31l6 9M644 31l-6 9" stroke="#a0a0a0" stroke-width="1.2"/><circle cx="635.5" cy="43" r="2" fill="none" stroke="#666" stroke-width="1.3"/><circle cx="642.5" cy="43" r="2" fill="none" stroke="#666" stroke-width="1.3"/><path d="M655.5 32.5h6l2 2v8h-8z" fill="#f4f4f4" stroke="#999"/><path d="M661.5 35.5h6l2 2v8h-8z" fill="#f4f4f4" stroke="#999"/><path d="M663.5 39.5h4M663.5 41.5h4M663.5 43.5h4" stroke="#aaa"/><rect x="678.5" y="32.5" width="15" height="11" rx="1.5" fill="#999" stroke="#777"/><rect x="682" y="30.5" width="7" height="3" fill="#bbb" stroke="#777"/><path d="M681.5 35.5h7l2 2v8h-9z" fill="#f0f0f0" stroke="#888"/><path d="M683 39h6M683 41h6M683 43h6" stroke="#999"/><path d="M825.5 32.5h5l2 2v8h-7z" fill="#f8f8f8" stroke="#aaa"/><path d="M831.5 34.5h6l2 2v9h-8z" fill="#f4f4f4" stroke="#aaa"/><rect x="848.5" y="31.5" width="15" height="14" rx="2" fill="#f8b820" stroke="#e09000"/><rect x="852" y="30" width="7" height="3" fill="#f8d870" stroke="#d0a030" stroke-width="0.8"/><path d="M851.5 35.5h6l3 3v8h-9z" fill="#c8e8f0" stroke="#6090a0"/><path d="M907 39l7-5.5 8 5.5-8 5.5z" fill="#7a7a7a"/><path d="M907 39v2.5l7 5 8-5.5v-2l-8 5.5z" fill="#c4c4c4"/><path d="M911 36q0-5 4-5.5" fill="#999" stroke="#777"/><rect x="916" y="31" width="7.5" height="7.5" rx="1.6" fill="#8c8c8c"/><path d="M919.5 32L922 34.5L919.5 37L917 34.5z" fill="#fff"/><rect x="919" y="34" width="1" height="1" fill="#8c8c8c"/><g fill="#fff" opacity="0.7"><rect x="917" y="32" width="1" height="1"/><rect x="921" y="32" width="1" height="1"/><rect x="917" y="36" width="1" height="1"/><rect x="921" y="36" width="1" height="1"/></g><rect x="930.5" y="31.5" width="15" height="13" fill="#fff" stroke="#999"/><rect x="930" y="30" width="7.5" height="7.5" rx="1.6" fill="#8c8c8c"/><path d="M933.5 31L936 33.5L933.5 36L931 33.5z" fill="#fff"/><rect x="933" y="33" width="1" height="1" fill="#8c8c8c"/><g fill="#fff" opacity="0.7"><rect x="931" y="31" width="1" height="1"/><rect x="935" y="31" width="1" height="1"/><rect x="931" y="35" width="1" height="1"/><rect x="935" y="35" width="1" height="1"/></g><rect x="953.5" y="31.5" width="15" height="13" fill="#fff" stroke="#999"/><rect x="953" y="30" width="7.5" height="7.5" rx="1.6" fill="#8c8c8c"/><path d="M956.5 31L959 33.5L956.5 36L954 33.5z" fill="#fff"/><rect x="956" y="33" width="1" height="1" fill="#8c8c8c"/><g fill="#fff" opacity="0.7"><rect x="954" y="31" width="1" height="1"/><rect x="958" y="31" width="1" height="1"/><rect x="954" y="35" width="1" height="1"/><rect x="958" y="35" width="1" height="1"/></g><path d="M937.5 42.5v-5h2.5a1.3 1.3 0 0 1 0 2.6h-2.5" fill="none" stroke="#111" stroke-width="1"/><path d="M956.5 42.5v-5h3.5v5M961.5 42.5v-5h2.5a1.3 1.3 0 0 1 0 2.6h-2.5" fill="none" stroke="#111" stroke-width="1"/><rect x="982.5" y="31.5" width="7" height="2" fill="#eee" stroke="#999"/><path d="M986.5 34v11.5M986.5 36.5h1M986.5 40.5h1M986.5 44.5h1" stroke="#999"/><g fill="#eee" stroke="#999"><rect x="987.5" y="35.5" width="6.5" height="2"/><rect x="987.5" y="39.5" width="6.5" height="2"/><rect x="987.5" y="43.5" width="6.5" height="2"/></g><rect x="1005.5" y="31.5" width="7" height="2" fill="#eee" stroke="#999"/><path d="M1009.5 34v11.5M1009.5 36.5h1M1009.5 40.5h1M1009.5 44.5h1" stroke="#999"/><g fill="#eee" stroke="#999"><rect x="1010.5" y="35.5" width="6.5" height="2"/><rect x="1010.5" y="39.5" width="6.5" height="2"/><rect x="1010.5" y="43.5" width="6.5" height="2"/></g><path d="M990 37.5l6-6.5" stroke="#999" stroke-width="2"/><path d="M1015.5 31.5l4 4M1019.5 31.5l-4 4" stroke="#999"/><path d="M1045 35.5h12" stroke="#5a5c70"/><path d="M1045 38.5h12" stroke="#5a5c70"/><path d="M1045 41.5h12" stroke="#5a5c70"/><path d="M1045 44.5h12" stroke="#5a5c70"/><path d="M1041 35.5h4.5" stroke="#0a32d0" stroke-width="2"/><path d="M1044.5 32.5l3.5 3-3.5 3z" fill="#0a32d0"/><path d="M1068 35.5h12" stroke="#5a5c70"/><path d="M1068 38.5h12" stroke="#5a5c70"/><path d="M1068 41.5h12" stroke="#5a5c70"/><path d="M1068 44.5h12" stroke="#5a5c70"/><path d="M1067.5 38v-4" stroke="#0a32d0" stroke-width="2"/><path d="M1064.5 35l3-3.5 3 3.5z" fill="#0a32d0"/><path d="M1091 35.5h12" stroke="#5a5c70"/><path d="M1091 38.5h12" stroke="#5a5c70"/><path d="M1091 41.5h12" stroke="#5a5c70"/><path d="M1091 44.5h12" stroke="#5a5c70"/><path d="M1090.5 39v4" stroke="#0a32d0" stroke-width="2"/><path d="M1087.5 42l3 3.5 3-3.5z" fill="#0a32d0"/><path d="M1114 35.5h12" stroke="#5a5c70"/><path d="M1114 38.5h12" stroke="#5a5c70"/><path d="M1114 41.5h12" stroke="#5a5c70"/><path d="M1114 44.5h12" stroke="#5a5c70"/><path d="M1110 43.5h4.5" stroke="#0a32d0" stroke-width="2"/><path d="M1113.5 40.5l3.5 3-3.5 3z" fill="#0a32d0"/><path d="M1152.5 32.2a6.5 6.5 0 0 1 7.5 10.3" fill="none" stroke="#98acac" stroke-width="1.5"/><path d="M1150.5 34.5l10 9" stroke="#c8883a" stroke-width="1.8"/><path d="M1147.5 44l3.5-3.5" stroke="#c8883a" stroke-width="1.8"/><path d="M1148.5 36l4-4.5 2 2" stroke="#383838" stroke-width="2" fill="none"/><rect x="1169" y="36" width="10" height="5.5" fill="#2a7ae8" stroke="#1a58b0" stroke-width="0.6"/><path d="M1179 36.5h3l3 3v2.5h-6z" fill="#f0a020" stroke="#a06010" stroke-width="0.6"/><rect x="1180" y="37" width="2.2" height="2" fill="#d0f0ff"/><circle cx="1172" cy="42.3" r="1.8" fill="#202020"/><circle cx="1182" cy="42.3" r="1.8" fill="#202020"/><circle cx="1172" cy="42.3" r="0.7" fill="#ff0"/><circle cx="1182" cy="42.3" r="0.7" fill="#ff0"/><path d="M1169 44.5h16" stroke="#555" stroke-width="0.8"/><rect x="1221" y="36" width="10" height="5.5" fill="#2a7ae8" stroke="#1a58b0" stroke-width="0.6"/><path d="M1231 36.5h3l3 3v2.5h-6z" fill="#f0a020" stroke="#a06010" stroke-width="0.6"/><rect x="1232" y="37" width="2.2" height="2" fill="#d0f0ff"/><circle cx="1224" cy="42.3" r="1.8" fill="#202020"/><circle cx="1234" cy="42.3" r="1.8" fill="#202020"/><circle cx="1224" cy="42.3" r="0.7" fill="#ff0"/><circle cx="1234" cy="42.3" r="0.7" fill="#ff0"/><path d="M1221 44.5h16" stroke="#555" stroke-width="0.8"/><path d="M1222 36q4-3 8-2l1 2z" fill="#e07020"/><g fill="#f07a10" stroke="#b84000" stroke-width="0.6"><rect x="1197.3" y="34.8" width="5.4" height="2.4" rx="1.1"/><rect x="1194.3" y="37.3" width="5.4" height="2.4" rx="1.1"/><rect x="1200.3" y="37.3" width="5.4" height="2.4" rx="1.1"/><rect x="1191.8" y="39.8" width="5.4" height="2.4" rx="1.1"/><rect x="1197.3" y="39.8" width="5.4" height="2.4" rx="1.1"/><rect x="1202.8" y="39.8" width="5.4" height="2.4" rx="1.1"/></g><g fill="#ffb060"><rect x="1198.5" y="35.3" width="2" height="0.8"/><rect x="1195.5" y="37.8" width="2" height="0.8"/><rect x="1201.5" y="37.8" width="2" height="0.8"/><rect x="1193" y="40.3" width="2" height="0.8"/><rect x="1198.5" y="40.3" width="2" height="0.8"/><rect x="1204" y="40.3" width="2" height="0.8"/></g><path d="M1257.5 39.5L1266 37.5L1273 39.5L1265 41.5z" fill="#e83040"/><path d="M1257.5 39.5L1265 41.5L1273 39.5v2.5L1265 44.2L1257.5 42z" fill="#fff" stroke="#e83040" stroke-width="1"/><path d="M1265.5 42.5L1272.5 40.5" stroke="#c8c8d8" stroke-width="0.6"/><path d="M1260 35.5L1267.5 33.2L1272.5 35L1264.5 37.3z" fill="#f070b0" stroke="#c04080" stroke-width="0.6"/><path d="M1260 35.5L1264.5 37.3L1272.5 35v2.3L1264.5 39.6L1260 37.8z" fill="#fff" stroke="#c04080" stroke-width="0.7"/><path d="M1280.5 39.5L1289 37.5L1296 39.5L1288 41.5z" fill="#20a8f0"/><path d="M1280.5 39.5L1288 41.5L1296 39.5v2.5L1288 44.2L1280.5 42z" fill="#fff" stroke="#20a8f0" stroke-width="1"/><path d="M1288.5 42.5L1295.5 40.5" stroke="#c8c8d8" stroke-width="0.6"/><path d="M1283 35.5L1290.5 33.2L1295.5 35L1287.5 37.3z" fill="#2050d8" stroke="#1030a0" stroke-width="0.6"/><path d="M1283 35.5L1287.5 37.3L1295.5 35v2.3L1287.5 39.6L1283 37.8z" fill="#fff" stroke="#1030a0" stroke-width="0.7"/><path d="M116.5 110.5h5l1 1.5h9v10.5h-15z" fill="#f6cc50" stroke="#8a8a8a"/><rect x="116.5" y="112.5" width="15" height="10" fill="#fcd860" stroke="#8a8a8a"/><path d="M121.5 115.5v4h6" fill="none" stroke="#333" stroke-width="1.2"/><path d="M119.5 117l2-2.5 2 2.5z" fill="#333"/><path d="M139.5 110.5h5l1 1.5h9v10.5h-15z" fill="#8ee070" stroke="#8a8a8a"/><rect x="139.5" y="112.5" width="15" height="10" fill="#80ea60" stroke="#8a8a8a"/><path d="M145 117.5h4" stroke="#333" stroke-width="1.5"/><path d="M187 112.5A5.5 5.5 0 0 0 177.5 117.5" fill="none" stroke="#22a022" stroke-width="2.2"/><path d="M178.5 120A5.5 5.5 0 0 0 188.5 115" fill="none" stroke="#22a022" stroke-width="2.2"/><path d="M183.5 110h5.5l-1.5 5z" fill="#22a022"/><path d="M181.5 122.5h-5.5l1.5-5z" fill="#22a022"/><g fill="#5898e0" stroke="#1c5cc8"><rect x="206.5" y="116.5" width="4.5" height="6.5"/><rect x="211.5" y="112.5" width="4.5" height="10.5"/><rect x="216" y="117" width="4.5" height="6"/></g><path d="M208 118.5h2M208 120.5h2M213 114.5h2M213 116.5h2M213 118.5h2M213 120.5h2M217.5 119h2M217.5 121h2" stroke="#e0ecff"/><path d="M211.5 112v-3" stroke="#333"/><path d="M211.5 109h2v1.5h-2z" fill="#e01010"/><rect x="213" y="109" width="7.5" height="7.5" rx="1.6" fill="#f08000"/><path d="M216.5 110L219 112.5L216.5 115L214 112.5z" fill="#fff"/><rect x="216" y="112" width="1" height="1" fill="#f08000"/><g fill="#fff" opacity="0.7"><rect x="214" y="110" width="1" height="1"/><rect x="218" y="110" width="1" height="1"/><rect x="214" y="114" width="1" height="1"/><rect x="218" y="114" width="1" height="1"/></g><rect x="228.5" y="109.5" width="6.5" height="13.5" rx="0.8" fill="#5898e0" stroke="#1c6ce0" stroke-width="1.2"/><path d="M230 111.5h3.5M230 113.5h3.5M230 115.5h3.5M230 117.5h3.5M230 119.5h3.5M230 121.5h3.5" stroke="#e0ecff"/><rect x="237.5" y="116.5" width="6" height="6.5" fill="#c0c8d0" stroke="#8890a0"/><path d="M238.5 118.5h4M238.5 120.5h4" stroke="#fff"/><path d="M238 122.5h5.5" stroke="#1030e0"/><rect x="236" y="109" width="7.5" height="7.5" rx="1.6" fill="#f08000"/><path d="M239.5 110L242 112.5L239.5 115L237 112.5z" fill="#fff"/><rect x="239" y="112" width="1" height="1" fill="#f08000"/><g fill="#fff" opacity="0.7"><rect x="237" y="110" width="1" height="1"/><rect x="241" y="110" width="1" height="1"/><rect x="237" y="114" width="1" height="1"/><rect x="241" y="114" width="1" height="1"/></g><rect x="255.5" y="110.5" width="7" height="13" fill="#eee" stroke="#aaa"/><path d="M257 112.5h4M257 114.5h4M257 116.5h4M257 118.5h4M257 120.5h4" stroke="#c4c4c4"/><rect x="259" y="109" width="7.5" height="7.5" rx="1.6" fill="#8a8a8a"/><path d="M262.5 110L265 112.5L262.5 115L260 112.5z" fill="#fff"/><rect x="262" y="112" width="1" height="1" fill="#8a8a8a"/><g fill="#fff" opacity="0.7"><rect x="260" y="110" width="1" height="1"/><rect x="264" y="110" width="1" height="1"/><rect x="260" y="114" width="1" height="1"/><rect x="264" y="114" width="1" height="1"/></g><path d="M275.5 110v13.5M278.5 110v13.5" stroke="#8a8a8a"/><path d="M275.5 112h3M275.5 115h3M275.5 118h3M275.5 121h3M275.5 123.5h3" stroke="#8a8a8a"/><path d="M274 110.5h9" stroke="#8a8a8a"/><circle cx="276" cy="109.5" r="1" fill="#9050f0"/><path d="M279 116l5-5" stroke="#702040" stroke-width="0.8"/><path d="M282 114l2-2 1 3z" fill="#a070f0"/><rect x="278" y="116" width="11" height="2" fill="#f07a10"/><rect x="278" y="118" width="11" height="0.9" fill="#802818"/><g fill="#2a88f8"><rect x="281" y="119" width="4" height="4.5"/><rect x="286" y="119" width="4" height="4.5"/></g><path d="M282 121h2M287 121h2" stroke="#cfe4ff"/><rect x="283" y="108" width="7.5" height="7.5" rx="1.6" fill="#f08000"/><path d="M286.5 109L289 111.5L286.5 114L284 111.5z" fill="#fff"/><rect x="286" y="111" width="1" height="1" fill="#f08000"/><g fill="#fff" opacity="0.7"><rect x="284" y="109" width="1" height="1"/><rect x="288" y="109" width="1" height="1"/><rect x="284" y="113" width="1" height="1"/><rect x="288" y="113" width="1" height="1"/></g><path d="M299.5 110v13.5M302.5 110v13.5" stroke="#8a8a8a"/><path d="M299.5 112h3M299.5 115h3M299.5 118h3M299.5 121h3M299.5 123.5h3" stroke="#8a8a8a"/><path d="M298 110.5h9" stroke="#8a8a8a"/><circle cx="300" cy="109.5" r="1" fill="#9050f0"/><path d="M303 114l4-3" stroke="#702040" stroke-width="0.8"/><rect x="302" y="113" width="9" height="2" fill="#f07a10"/><rect x="302" y="115" width="9" height="0.8" fill="#802818"/><rect x="302" y="116.5" width="7.5" height="3.5" rx="1" fill="#1060f8"/><path d="M309.5 118h1v3h-4v2" fill="none" stroke="#222"/><rect x="304" y="122" width="2" height="1.5" fill="#e00"/><rect x="310.5" y="116" width="3" height="7.5" fill="#2a88f8"/><rect x="306" y="108" width="7.5" height="7.5" rx="1.6" fill="#f08000"/><path d="M309.5 109L312 111.5L309.5 114L307 111.5z" fill="#fff"/><rect x="309" y="111" width="1" height="1" fill="#f08000"/><g fill="#fff" opacity="0.7"><rect x="307" y="109" width="1" height="1"/><rect x="311" y="109" width="1" height="1"/><rect x="307" y="113" width="1" height="1"/><rect x="311" y="113" width="1" height="1"/></g><path d="M320.5 116l7.5-7.5 7.5 7-8 7z" fill="#3a9a62" stroke="#1e7040" stroke-width="0.6"/><path d="M320.5 116v2l7 5.5 8-7.5v-1l-8 7z" fill="#dadada" stroke="#a0a0a0" stroke-width="0.6"/><rect x="329" y="109" width="7.5" height="7.5" rx="1.6" fill="#f08000"/><path d="M332.5 110L335 112.5L332.5 115L330 112.5z" fill="#fff"/><rect x="332" y="112" width="1" height="1" fill="#f08000"/><g fill="#fff" opacity="0.7"><rect x="330" y="110" width="1" height="1"/><rect x="334" y="110" width="1" height="1"/><rect x="330" y="114" width="1" height="1"/><rect x="334" y="114" width="1" height="1"/></g><path d="M343.5 116l7.5-7.5 7.5 7-8 7z" fill="#3a9a62" stroke="#1e7040" stroke-width="0.6"/><path d="M343.5 116v2l7 5.5 8-7.5v-1l-8 7z" fill="#dadada" stroke="#a0a0a0" stroke-width="0.6"/><rect x="347" y="115.5" width="7.5" height="3.5" rx="1" fill="#1070f8"/><path d="M354.5 117h1v3h-4v2" fill="none" stroke="#222"/><rect x="349" y="121" width="2" height="2" fill="#e00"/><rect x="352" y="109" width="7.5" height="7.5" rx="1.6" fill="#f08000"/><path d="M355.5 110L358 112.5L355.5 115L353 112.5z" fill="#fff"/><rect x="355" y="112" width="1" height="1" fill="#f08000"/><g fill="#fff" opacity="0.7"><rect x="353" y="110" width="1" height="1"/><rect x="357" y="110" width="1" height="1"/><rect x="353" y="114" width="1" height="1"/><rect x="357" y="114" width="1" height="1"/></g><path d="M373.5 116l7-6 7 6" fill="none" stroke="#b86020" stroke-width="1.2"/><path d="M375.5 115v8.5h10v-8.5l-5-4.5z" fill="#fff" stroke="#666" stroke-width="0.9"/><rect x="376" y="110" width="1.8" height="3.5" fill="#e0a838"/><path d="M374 123.5h13" stroke="#555"/><rect x="376.5" y="117" width="2.2" height="6" fill="#f0b020" stroke="#804020" stroke-width="0.5"/><rect x="380.5" y="116" width="2.5" height="3" fill="#5a98e8"/><rect x="381" y="109" width="7.5" height="7.5" rx="1.6" fill="#f08000"/><path d="M384.5 110L387 112.5L384.5 115L382 112.5z" fill="#fff"/><rect x="384" y="112" width="1" height="1" fill="#f08000"/><g fill="#fff" opacity="0.7"><rect x="382" y="110" width="1" height="1"/><rect x="386" y="110" width="1" height="1"/><rect x="382" y="114" width="1" height="1"/><rect x="386" y="114" width="1" height="1"/></g><path d="M396.5 116l7-6 7 6" fill="none" stroke="#b86020" stroke-width="1.2"/><path d="M398.5 115v8.5h10v-8.5l-5-4.5z" fill="#fff" stroke="#666" stroke-width="0.9"/><rect x="399" y="110" width="1.8" height="3.5" fill="#e0a838"/><path d="M397 123.5h13" stroke="#555"/><rect x="398" y="116" width="7.5" height="3.5" rx="1" fill="#1070f8"/><path d="M405.5 117.5h1v3h-4v2" fill="none" stroke="#222"/><rect x="400" y="122" width="2" height="1.5" fill="#e00"/><rect x="404" y="109" width="7.5" height="7.5" rx="1.6" fill="#f08000"/><path d="M407.5 110L410 112.5L407.5 115L405 112.5z" fill="#fff"/><rect x="407" y="112" width="1" height="1" fill="#f08000"/><g fill="#fff" opacity="0.7"><rect x="405" y="110" width="1" height="1"/><rect x="409" y="110" width="1" height="1"/><rect x="405" y="114" width="1" height="1"/><rect x="409" y="114" width="1" height="1"/></g><rect x="424.5" y="109.5" width="15" height="13.5" fill="#fff" stroke="#999"/><rect x="424" y="108" width="7.5" height="7.5" rx="1.6" fill="#8c8c8c"/><path d="M427.5 109L430 111.5L427.5 114L425 111.5z" fill="#fff"/><rect x="427" y="111" width="1" height="1" fill="#8c8c8c"/><g fill="#fff" opacity="0.7"><rect x="425" y="109" width="1" height="1"/><rect x="429" y="109" width="1" height="1"/><rect x="425" y="113" width="1" height="1"/><rect x="429" y="113" width="1" height="1"/></g><rect x="447.5" y="109.5" width="15" height="13.5" fill="#fff" stroke="#999"/><rect x="447" y="108" width="7.5" height="7.5" rx="1.6" fill="#8c8c8c"/><path d="M450.5 109L453 111.5L450.5 114L448 111.5z" fill="#fff"/><rect x="450" y="111" width="1" height="1" fill="#8c8c8c"/><g fill="#fff" opacity="0.7"><rect x="448" y="109" width="1" height="1"/><rect x="452" y="109" width="1" height="1"/><rect x="448" y="113" width="1" height="1"/><rect x="452" y="113" width="1" height="1"/></g><path d="M431.5 121v-5.5h2.5a1.4 1.4 0 0 1 0 2.8h-2.5" fill="none" stroke="#111" stroke-width="1"/><path d="M450.5 121v-5.5h3.5v5.5M455.5 121v-5.5h2.5a1.4 1.4 0 0 1 0 2.8h-2.5" fill="none" stroke="#111" stroke-width="1"/><path d="M478 110l5 5h-3v7h-4v-7h-3z" fill="#8c8c8c"/><path d="M501 122l5-5h-3v-7h-4v7h-3z" fill="#8c8c8c"/><path d="M525 114l5-5 5 5" fill="none" stroke="#a03010" stroke-width="1.2"/><path d="M526.5 113v4h7v-4l-3.5-3z" fill="#fff" stroke="#999" stroke-width="0.8"/><rect x="530" y="113" width="2" height="2" fill="#70a8e8"/><path d="M522.5 119l3-3 3 3M531.5 119l3-3 3 3" fill="none" stroke="#a03010" stroke-width="1.1"/><path d="M523.5 118.5v4.5h4v-4.5M532.5 118.5v4.5h4v-4.5" fill="#fff" stroke="#999" stroke-width="0.8"/><rect x="525" y="120.5" width="1.5" height="2.5" fill="#e0a040"/><rect x="534" y="120.5" width="1.5" height="2.5" fill="#e0a040"/><rect x="527" y="111" width="1.2" height="2.5" fill="#a03010"/><rect x="548.5" y="109.5" width="12" height="11" fill="#90d0b8" stroke="#50908a"/><rect x="545.5" y="111.5" width="12.5" height="11" fill="#2ea080" stroke="#207060"/><text x="547.5" y="116.8" font-size="6" font-family="Liberation Sans" font-weight="bold" fill="#fff">01</text><text x="549" y="122" font-size="6" font-family="Liberation Sans" font-weight="bold" fill="#fff">10</text><rect x="554" y="108" width="7.5" height="7.5" rx="1.6" fill="#f08000"/><path d="M557.5 109L560 111.5L557.5 114L555 111.5z" fill="#fff"/><rect x="557" y="111" width="1" height="1" fill="#f08000"/><g fill="#fff" opacity="0.7"><rect x="555" y="109" width="1" height="1"/><rect x="559" y="109" width="1" height="1"/><rect x="555" y="113" width="1" height="1"/><rect x="559" y="113" width="1" height="1"/></g><rect x="574.5" y="109.5" width="15.5" height="13.5" fill="#e4f8f0" stroke="#999"/><path d="M578 111.5v3.5M580 111.5v3.5M578 111.5h2M578 115h2M585 117v4M587 117v4M585 117h2M585 121h2" stroke="#333"/><path d="M583 111l-1.5 10" stroke="#333"/><rect x="583" y="108" width="7.5" height="7.5" rx="1.6" fill="#f08000"/><path d="M586.5 109L589 111.5L586.5 114L584 111.5z" fill="#fff"/><rect x="586" y="111" width="1" height="1" fill="#f08000"/><g fill="#fff" opacity="0.7"><rect x="584" y="109" width="1" height="1"/><rect x="588" y="109" width="1" height="1"/><rect x="584" y="113" width="1" height="1"/><rect x="588" y="113" width="1" height="1"/></g><rect x="597.5" y="109.5" width="15.5" height="13.5" fill="#e0f8e0" stroke="#999"/><text x="597.5" y="121" font-size="8.5" font-family="Liberation Mono" fill="#222" textLength="15" lengthAdjust="spacingAndGlyphs">M29</text><rect x="606" y="108" width="7.5" height="7.5" rx="1.6" fill="#f08000"/><path d="M609.5 109L612 111.5L609.5 114L607 111.5z" fill="#fff"/><rect x="609" y="111" width="1" height="1" fill="#f08000"/><g fill="#fff" opacity="0.7"><rect x="607" y="109" width="1" height="1"/><rect x="611" y="109" width="1" height="1"/><rect x="607" y="113" width="1" height="1"/><rect x="611" y="113" width="1" height="1"/></g><rect x="620.5" y="109.5" width="15.5" height="13.5" fill="#e0ecfa" stroke="#999"/><text x="621.5" y="121" font-size="8.5" font-family="Liberation Mono" fill="#222" textLength="12" lengthAdjust="spacingAndGlyphs">РР</text><rect x="629" y="108" width="7.5" height="7.5" rx="1.6" fill="#f08000"/><path d="M632.5 109L635 111.5L632.5 114L630 111.5z" fill="#fff"/><rect x="632" y="111" width="1" height="1" fill="#f08000"/><g fill="#fff" opacity="0.7"><rect x="630" y="109" width="1" height="1"/><rect x="634" y="109" width="1" height="1"/><rect x="630" y="113" width="1" height="1"/><rect x="634" y="113" width="1" height="1"/></g><rect x="643.5" y="109.5" width="15.5" height="13.5" fill="#e8f8e4" stroke="#999"/><text x="644" y="121" font-size="8.5" font-family="Liberation Mono" fill="#222" textLength="13" lengthAdjust="spacingAndGlyphs">Ф3</text><rect x="652" y="108" width="7.5" height="7.5" rx="1.6" fill="#f08000"/><path d="M655.5 109L658 111.5L655.5 114L653 111.5z" fill="#fff"/><rect x="655" y="111" width="1" height="1" fill="#f08000"/><g fill="#fff" opacity="0.7"><rect x="653" y="109" width="1" height="1"/><rect x="657" y="109" width="1" height="1"/><rect x="653" y="113" width="1" height="1"/><rect x="657" y="113" width="1" height="1"/></g><path d="M672.5 110.5h5l1 1.5h9v10.5h-15z" fill="#9a9a9a" stroke="#7a7a7a"/><rect x="672.5" y="112.5" width="15" height="10.5" fill="#a8a8a8" stroke="#7a7a7a"/><rect x="681" y="108" width="7.5" height="7.5" rx="1.6" fill="#9a9a9a"/><path d="M684.5 109L687 111.5L684.5 114L682 111.5z" fill="#fff"/><rect x="684" y="111" width="1" height="1" fill="#9a9a9a"/><g fill="#fff" opacity="0.7"><rect x="682" y="109" width="1" height="1"/><rect x="686" y="109" width="1" height="1"/><rect x="682" y="113" width="1" height="1"/><rect x="686" y="113" width="1" height="1"/></g><path d="M703.5 110.5l11 11M714.5 110.5l-11 11" stroke="#a0a0a0" stroke-width="1.4"/></svg>
<svg style="left:0;top:0" width="520" height="420" viewBox="0 0 520 420"><defs><linearGradient id="gy" x1="0" y1="0" x2="1" y2="1"><stop offset="0" stop-color="#ffff00"/><stop offset="1" stop-color="#ff8800"/></linearGradient><linearGradient id="gb" x1="0" y1="1" x2="1" y2="0"><stop offset="0" stop-color="#50f8ff"/><stop offset="1" stop-color="#0068f8"/></linearGradient></defs><path d="M31.5 157L36.5 169H26z" fill="#2a78d8"/><rect x="34.5" y="162.5" width="7" height="6.5" fill="#6cc040" stroke="#4a9020" stroke-width="0.6"/><circle cx="33.5" cy="166.5" r="3.9" fill="#e82010"/><ellipse cx="33" cy="164.6" rx="1.7" ry="1" fill="#ffb8a8"/><g fill="#5898e0" stroke="#1c5cc8"><rect x="45.5" y="177.5" width="4.5" height="9"/><rect x="50.5" y="175.5" width="4.5" height="11"/><rect x="55.5" y="179.5" width="4.5" height="7"/></g><path d="M47 179.5h2M47 181.5h2M47 183.5h2M52 177.5h2M52 179.5h2M52 181.5h2M52 183.5h2M57 181.5h2M57 183.5h2" stroke="#e0ecff"/><path d="M51.5 175.5V172" stroke="#333"/><path d="M52 172h3l-1 1 1 1h-3z" fill="#e01010"/><path d="M45.5 189.5h6l1 1.5h8v11.5h-15z" fill="#f0b030" stroke="#8a8a8a"/><rect x="45.5" y="191.5" width="15" height="10.5" fill="url(#gy)" stroke="#8a8a8a"/><path d="M45.5 211.5l7.5-7 7.5 7" fill="none" stroke="#c06020" stroke-width="1.3"/><path d="M47.5 210.5v7.5h11v-7.5l-5.5-5z" fill="#fff" stroke="#777"/><rect x="47.5" y="204" width="2" height="5" fill="#e0a040"/><rect x="49" y="212.5" width="2.5" height="5.5" fill="#f0a020" stroke="#904020" stroke-width="0.5"/><rect x="54" y="212" width="3" height="3" fill="#60a0f0"/><path d="M46 218.5h14" stroke="#555"/><path d="M64.5 220.5h8l1.5 2h5.5v11.5h-15z" fill="#48b8f8" stroke="#b0a8a0"/><rect x="64.5" y="222.5" width="15" height="11" fill="url(#gb)" stroke="#b0a8a0"/><path d="M64.5 236.5h8l1.5 2h5.5v11.5h-15z" fill="#48b8f8" stroke="#b0a8a0"/><rect x="64.5" y="238.5" width="15" height="11" fill="url(#gb)" stroke="#b0a8a0"/><path d="M64.5 252.5h8l1.5 2h5.5v11.5h-15z" fill="#48b8f8" stroke="#b0a8a0"/><rect x="64.5" y="254.5" width="15" height="11" fill="url(#gb)" stroke="#b0a8a0"/><rect x="83.5" y="268.5" width="15" height="13" fill="#dcf4fc" stroke="#aaa"/><text x="82.5" y="280" font-size="9" font-family="Liberation Mono" fill="#222" textLength="16" lengthAdjust="spacingAndGlyphs">КС-6</text><rect x="83.5" y="284.5" width="15.5" height="13" fill="#dcfce8" stroke="#aaa"/><path d="M86.5 286.5v3.5M88.5 286.5v3.5M86.5 286.5h2M86.5 290h2M93.5 291.5v4.5M95.5 291.5v4.5M93.5 291.5h2M93.5 296h2" stroke="#222"/><path d="M91.5 286l-1 10.5" stroke="#222"/><rect x="102.5" y="300.5" width="15.5" height="13" fill="#dcfce8" stroke="#aaa"/><path d="M105.5 302.5v3.5M107.5 302.5v3.5M105.5 302.5h2M105.5 306h2M112.5 307.5v4.5M114.5 307.5v4.5M112.5 307.5h2M112.5 312h2" stroke="#222"/><path d="M110.5 302l-1 10.5" stroke="#222"/><rect x="121.5" y="316.5" width="15.5" height="13" fill="#dcfce8" stroke="#aaa"/><path d="M124.5 318.5v3.5M126.5 318.5v3.5M124.5 318.5h2M124.5 322h2M131.5 323.5v4.5M133.5 323.5v4.5M131.5 323.5h2M131.5 328h2" stroke="#222"/><path d="M129.5 318l-1 10.5" stroke="#222"/><path d="M64.5 332.5h8l1.5 2h5.5v11.5h-15z" fill="#48b8f8" stroke="#b0a8a0"/><rect x="64.5" y="334.5" width="15" height="11" fill="url(#gb)" stroke="#b0a8a0"/><path d="M64.5 348.5h8l1.5 2h5.5v11.5h-15z" fill="#48b8f8" stroke="#b0a8a0"/><rect x="64.5" y="350.5" width="15" height="11" fill="url(#gb)" stroke="#b0a8a0"/><path d="M64.5 364.5h8l1.5 2h5.5v11.5h-15z" fill="#48b8f8" stroke="#b0a8a0"/><rect x="64.5" y="366.5" width="15" height="11" fill="url(#gb)" stroke="#b0a8a0"/><path d="M47.5 381.5h3l1 1.5h7v7h-11z" fill="#fce060" stroke="#9890c0"/><path d="M45 389q4-2 8-0.5t8-0.5v3q-2 3-8 3t-8-3z" fill="#f4b070" stroke="#d07830" stroke-width="0.8"/><path d="M50 390.5h6" stroke="#a05020"/><path d="M59.5 388v5" stroke="#222" stroke-width="1.2"/><ellipse cx="53" cy="398.5" rx="3" ry="2" fill="#dde8f8" stroke="#a0a8b8" stroke-width="0.8"/><rect x="49" y="400" width="8" height="1.5" fill="#404858"/><path d="M47 402.5h12" stroke="#404858" stroke-width="1.2"/><path d="M49.5 403h7v7.5h-7z" fill="#505868"/><path d="M50 405h6M50 407h6M50 409h6" stroke="#c0c8d0" stroke-dasharray="1 1"/><path d="M48.5 411h9" stroke="#404858" stroke-width="1.2"/></svg>
<span style="left:35.00px;top:7.00px;font-size:12px;color:#000;letter-spacing:-0.159px;font-weight:400;">Смета</span>
<span style="left:81.40px;top:7.00px;font-size:12px;color:#000;letter-spacing:-0.282px;font-weight:400;">Работа</span>
<span style="left:131.40px;top:7.00px;font-size:12px;color:#000;letter-spacing:0.113px;font-weight:400;">Информация</span>
<span style="left:217.70px;top:7.00px;font-size:12px;color:#000;letter-spacing:0.210px;font-weight:400;">Справочники</span>
<span style="left:304.40px;top:7.00px;font-size:12px;color:#000;letter-spacing:0.195px;font-weight:400;">Настройки</span>
<span style="left:376.10px;top:7.00px;font-size:12px;color:#000;letter-spacing:-0.057px;font-weight:400;">Отдохнуть</span>
<span style="left:445.10px;top:7.00px;font-size:12px;color:#000;letter-spacing:0.670px;font-weight:400;">Окно</span>
<span style="left:486.30px;top:7.00px;font-size:12px;color:#000;letter-spacing:0.608px;font-weight:400;">Помощь</span>
<span style="left:547.30px;top:7.00px;font-size:12px;color:#000;letter-spacing:0.125px;font-weight:400;">Структурные справочники</span>
<span style="left:388.50px;top:32.00px;font-size:12px;color:#a0a0a0;letter-spacing:-0.043px;font-weight:400;">Изменить тип строки...</span>
<span style="left:708.70px;top:32.00px;font-size:12px;color:#a0a0a0;letter-spacing:-0.048px;font-weight:400;">Копировать в смету</span>
<span style="left:17.60px;top:58.00px;font-size:12px;color:#a0a0a0;letter-spacing:0.029px;font-weight:400;">Ресурсы</span>
<span style="left:73.60px;top:58.00px;font-size:12px;color:#a0a0a0;letter-spacing:0.019px;font-weight:400;">Панель цен</span>
<span style="left:146.60px;top:58.00px;font-size:12px;color:#a0a0a0;letter-spacing:0.078px;font-weight:400;">Лимит. затраты</span>
<span style="left:240.60px;top:58.00px;font-size:12px;color:#a0a0a0;letter-spacing:-0.484px;font-weight:400;">ЭСН</span>
<span style="left:274.30px;top:58.00px;font-size:12px;color:#a0a0a0;letter-spacing:-0.174px;font-weight:400;">Состав работ</span>
<span style="left:356.30px;top:58.00px;font-size:12px;color:#a0a0a0;letter-spacing:-0.280px;font-weight:400;">Тех. часть</span>
<span style="left:419.10px;top:58.00px;font-size:12px;color:#a0a0a0;letter-spacing:0.044px;font-weight:400;">Индексы</span>
<span style="left:477.20px;top:58.00px;font-size:12px;color:#a0a0a0;letter-spacing:0.245px;font-weight:400;">Поправки</span>
<span style="left:540.80px;top:58.00px;font-size:12px;color:#a0a0a0;letter-spacing:0.414px;font-weight:400;">Формулы</span>
<span style="left:604.20px;top:58.00px;font-size:12px;color:#a0a0a0;letter-spacing:-0.105px;font-weight:400;">Структура</span>
<span style="left:669.00px;top:58.00px;font-size:12px;color:#a0a0a0;letter-spacing:-0.012px;font-weight:400;">Оглавление</span>
<span style="left:746.10px;top:58.00px;font-size:12px;color:#000;letter-spacing:0.156px;font-weight:400;">Список открытых окон</span>
<span style="left:18.30px;top:85.00px;font-size:12px;color:#000;letter-spacing:0.280px;font-weight:400;">Справочники</span>
<span style="left:112.90px;top:86.00px;font-size:12px;color:#000;letter-spacing:0.224px;font-weight:400;">Проекты</span>
<span style="left:171.90px;top:85.00px;font-size:12px;color:#000;letter-spacing:0.024px;font-weight:400;">Аналитика</span>
<span style="left:242.90px;top:85.00px;font-size:12px;color:#000;letter-spacing:0.271px;font-weight:400;">Стройки</span>
<span style="left:301.90px;top:85.00px;font-size:12px;color:#000;letter-spacing:0.241px;font-weight:400;">Нормативы</span>
<span style="left:379.30px;top:85.00px;font-size:12px;color:#000;letter-spacing:-0.100px;font-weight:400;">ЭСН и методики</span>
<span style="left:480.90px;top:85.00px;font-size:12px;color:#000;letter-spacing:0.232px;font-weight:400;">Поисковые маршруты</span>
<span style="left:619.30px;top:85.00px;font-size:12px;color:#000;letter-spacing:0.084px;font-weight:400;">Справочник расчётных формул</span>
<span style="left:808.90px;top:85.00px;font-size:12px;color:#000;letter-spacing:-0.043px;font-weight:400;">Шаблоны Сводных Расчётов</span>
<span style="left:980.20px;top:85.00px;font-size:12px;color:#000;letter-spacing:0.259px;font-weight:400;">Поправки</span>
<span style="left:1047.00px;top:85.00px;font-size:12px;color:#000;letter-spacing:0.101px;font-weight:400;">Организации</span>
<span style="left:17.70px;top:110.00px;font-size:12px;color:#000;letter-spacing:-0.081px;font-weight:400;">Действие</span>
<span style="left:81.40px;top:110.00px;font-size:12px;color:#000;letter-spacing:-0.609px;font-weight:400;">Вид</span>
<span style="left:9.30px;top:133.00px;font-size:12px;color:#000;letter-spacing:0.227px;transform:scaleX(0.8800);transform-origin:0 0;font-weight:400;">Структура</span>
<span style="left:534.30px;top:136.00px;font-size:12px;color:#000;letter-spacing:0.275px;transform:scaleX(0.8800);transform-origin:0 0;font-weight:400;">Содержание</span>
<span style="left:609.20px;top:134.00px;font-size:12px;color:#000;letter-spacing:0.527px;transform:scaleX(0.8800);transform-origin:0 0;font-weight:400;">Параметры</span>
<span style="left:680.20px;top:136.00px;font-size:12px;color:#000;letter-spacing:0.497px;transform:scaleX(0.8800);transform-origin:0 0;font-weight:400;">Объектная смета</span>
<span style="left:782.20px;top:136.00px;font-size:12px;color:#000;letter-spacing:0.039px;transform:scaleX(0.8800);transform-origin:0 0;font-weight:400;">ССР и СЗ</span>
<span style="left:841.20px;top:136.00px;font-size:12px;color:#000;letter-spacing:0.687px;transform:scaleX(0.8800);transform-origin:0 0;font-weight:400;">НМЦК</span>
<span style="left:885.10px;top:136.00px;font-size:12px;color:#000;letter-spacing:0.478px;transform:scaleX(0.8800);transform-origin:0 0;font-weight:400;">ВОР</span>
<span style="left:927.30px;top:136.00px;font-size:12px;color:#000;letter-spacing:0.257px;transform:scaleX(0.8800);transform-origin:0 0;font-weight:400;">Исполнение Сметы контракта (ЕИС)</span>
<span style="left:552.60px;top:162.00px;font-size:12px;color:#000;letter-spacing:0.282px;transform:scaleX(0.8800);transform-origin:0 0;font-weight:400;">Процентовка утверждена</span>
<span style="left:1404.90px;top:164.00px;font-size:12px;color:#000;letter-spacing:0.309px;transform:scaleX(0.8800);transform-origin:0 0;font-weight:400;">Дата утверждения:</span>
<span style="left:552.60px;top:196.00px;font-size:12px;color:#000;letter-spacing:0.346px;transform:scaleX(0.8800);transform-origin:0 0;font-weight:400;">Применять индексы в соответствии с 421пр</span>
<span style="left:795.50px;top:198.00px;font-size:12px;color:#000;letter-spacing:0.299px;transform:scaleX(0.8800);transform-origin:0 0;font-weight:400;">построчно</span>
<span style="left:537.70px;top:220.00px;font-size:12px;color:#000;letter-spacing:0.261px;transform:scaleX(0.8800);transform-origin:0 0;font-weight:400;">Уровни цен (2)</span>
<span style="left:537.70px;top:236.00px;font-size:12px;color:#000;letter-spacing:0.278px;transform:scaleX(0.8800);transform-origin:0 0;font-weight:400;">Типовой расчет</span>
<span style="left:537.70px;top:252.00px;font-size:12px;color:#000;letter-spacing:0.284px;transform:scaleX(0.8800);transform-origin:0 0;font-weight:400;">Способ расчета</span>
<span style="left:537.70px;top:268.00px;font-size:12px;color:#000;letter-spacing:0.318px;transform:scaleX(0.8800);transform-origin:0 0;font-weight:400;">Поправки</span>
<span style="left:537.70px;top:284.00px;font-size:12px;color:#000;letter-spacing:0.272px;transform:scaleX(0.8800);transform-origin:0 0;font-weight:400;">Работа со строками</span>
<span style="left:537.70px;top:300.00px;font-size:12px;color:#000;letter-spacing:0.301px;transform:scaleX(0.8800);transform-origin:0 0;font-weight:400;">Поисковые маршруты</span>
<span style="left:537.70px;top:316.00px;font-size:12px;color:#000;letter-spacing:0.314px;transform:scaleX(0.8800);transform-origin:0 0;font-weight:400;">Наименования</span>
<span style="left:537.70px;top:332.00px;font-size:12px;color:#fff;letter-spacing:0.329px;transform:scaleX(0.8800);transform-origin:0 0;font-weight:400;">Описание</span>
<span style="left:537.70px;top:348.00px;font-size:12px;color:#000;letter-spacing:0.297px;transform:scaleX(0.8800);transform-origin:0 0;font-weight:400;">Должностные лица</span>
<span style="left:537.70px;top:364.00px;font-size:12px;color:#000;letter-spacing:0.269px;transform:scaleX(0.8800);transform-origin:0 0;font-weight:400;">Бухгалтерские реквизиты</span>
<span style="left:537.70px;top:380.00px;font-size:12px;color:#000;letter-spacing:0.319px;transform:scaleX(0.8800);transform-origin:0 0;font-weight:400;">Ревизия</span>
<span style="left:691.50px;top:224.00px;font-size:12px;color:#000;letter-spacing:0.309px;transform:scaleX(0.8800);transform-origin:0 0;font-weight:400;">Наименование акта:</span>
<span style="left:801.90px;top:224.00px;font-size:12px;color:#000;letter-spacing:0.543px;transform:scaleX(0.8800);transform-origin:0 0;font-weight:400;">Август, 2025 г.</span>
<span style="left:738.70px;top:247.00px;font-size:12px;color:#000;letter-spacing:0.061px;transform:scaleX(0.8800);transform-origin:0 0;font-weight:400;">Шифр акта:</span>
<span style="left:801.90px;top:247.00px;font-size:12px;color:#000;letter-spacing:0.543px;transform:scaleX(0.8800);transform-origin:0 0;font-weight:400;">Август, 2025 г.</span>
<span style="left:760.50px;top:269.00px;font-size:12px;color:#000;letter-spacing:0.256px;transform:scaleX(0.8800);transform-origin:0 0;font-weight:400;">Месяц:</span>
<span style="left:801.90px;top:269.00px;font-size:12px;color:#000;letter-spacing:0.301px;transform:scaleX(0.8800);transform-origin:0 0;font-weight:400;">Август</span>
<span style="left:919.10px;top:268.00px;font-size:12px;color:#000;letter-spacing:0.622px;transform:scaleX(0.8800);transform-origin:0 0;font-weight:400;">Год:</span>
<span style="left:945.60px;top:268.00px;font-size:12px;color:#000;letter-spacing:0.493px;transform:scaleX(0.8800);transform-origin:0 0;font-weight:400;">2025</span>
<span style="left:704.50px;top:289.00px;font-size:12px;color:#000;letter-spacing:0.109px;transform:scaleX(0.8800);transform-origin:0 0;font-weight:400;">Оплачено</span>
<span style="left:759.40px;top:289.00px;font-size:12px;color:#000;letter-spacing:0.200px;transform:scaleX(0.8800);transform-origin:0 0;font-weight:400;">Сумма:</span>
<span style="left:801.90px;top:289.00px;font-size:12px;color:#000;letter-spacing:0.000px;font-weight:400;">0</span>
<span style="left:912.10px;top:289.00px;font-size:12px;color:#000;letter-spacing:0.592px;transform:scaleX(0.8800);transform-origin:0 0;font-weight:400;">Дата:</span>
<span style="left:702.50px;top:311.00px;font-size:12px;color:#000;letter-spacing:0.328px;transform:scaleX(0.8800);transform-origin:0 0;font-weight:400;">Номер документа:</span>
<span style="left:691.80px;top:329.00px;font-size:12px;color:#000;letter-spacing:0.304px;transform:scaleX(0.8800);transform-origin:0 0;font-weight:400;">Объём выполненных работ считать как</span>
<span style="left:899.50px;top:329.00px;font-size:12px;color:#000;letter-spacing:0.459px;transform:scaleX(0.8800);transform-origin:0 0;font-weight:400;">сумму по всем актам</span>
<span style="left:796.80px;top:353.00px;font-size:12px;color:#000;letter-spacing:0.345px;transform:scaleX(0.8800);transform-origin:0 0;font-weight:400;">Дата составления:</span>
<span style="left:751.30px;top:371.00px;font-size:12px;color:#000;letter-spacing:0.199px;transform:scaleX(0.8800);transform-origin:0 0;font-weight:400;">Примечание к номеру КС-2:</span>
<span style="left:1576.50px;top:1061.00px;font-size:12px;color:#a0a0a0;letter-spacing:0.430px;transform:scaleX(0.8800);transform-origin:0 0;font-weight:400;">Применить</span>
<span style="left:1680.40px;top:1061.00px;font-size:12px;color:#a0a0a0;letter-spacing:0.478px;transform:scaleX(0.8800);transform-origin:0 0;font-weight:400;">Отмена</span>
<span style="left:1730.40px;top:1096.00px;font-size:12px;color:#000;letter-spacing:0.000px;font-weight:400;">RU</span>
<span style="left:47.30px;top:157.00px;font-size:12px;color:#000;letter-spacing:0.610px;transform:scaleX(0.8800);transform-origin:0 0;font-weight:400;">Проекты</span>
<span style="left:66.30px;top:173.00px;font-size:12px;color:#000;letter-spacing:0.284px;transform:scaleX(0.8800);transform-origin:0 0;font-weight:400;">256-02-2025 [Здание спортивного комплекса]</span>
<span style="left:305.60px;top:173.00px;font-size:12px;color:#0000ff;letter-spacing:0.658px;transform:scaleX(0.8800);transform-origin:0 0;font-weight:400;">[4]</span>
<span style="left:66.30px;top:189.00px;font-size:12px;color:#000;letter-spacing:0.364px;transform:scaleX(0.8800);transform-origin:0 0;font-weight:400;">Новая папка [Новая папка]</span>
<span style="left:212.10px;top:189.00px;font-size:12px;color:#0000ff;letter-spacing:0.487px;transform:scaleX(0.8800);transform-origin:0 0;font-weight:400;">[36]</span>
<span style="left:66.30px;top:205.00px;font-size:12px;color:#000;letter-spacing:0.330px;transform:scaleX(0.8800);transform-origin:0 0;font-weight:400;">ЛС-02-01 [Устройство котлована]</span>
<span style="left:85.30px;top:221.00px;font-size:12px;color:#000;letter-spacing:0.833px;transform:scaleX(0.8800);transform-origin:0 0;font-weight:400;">СТРУКТУРА</span>
<span style="left:85.30px;top:237.00px;font-size:12px;color:#000;letter-spacing:0.243px;transform:scaleX(0.8800);transform-origin:0 0;font-weight:400;">СМЕТЫ</span>
<span style="left:85.30px;top:253.00px;font-size:12px;color:#000;letter-spacing:0.440px;transform:scaleX(0.8800);transform-origin:0 0;font-weight:400;">ВЫПОЛНЕНИЯ</span>
<span style="left:104.30px;top:269.00px;font-size:12px;color:#000;letter-spacing:0.276px;transform:scaleX(0.8800);transform-origin:0 0;font-weight:400;">КС-6а</span>
<span style="left:104.30px;top:285.00px;font-size:12px;color:#000;letter-spacing:0.228px;transform:scaleX(0.8800);transform-origin:0 0;font-weight:400;">2025 [2025]</span>
<span style="left:123.30px;top:301.00px;font-size:12px;color:#000;letter-spacing:0.448px;transform:scaleX(0.8800);transform-origin:0 0;font-weight:400;">Август [Август]</span>
<span style="left:142.30px;top:317.00px;font-size:12px;color:#000;letter-spacing:0.514px;transform:scaleX(0.8800);transform-origin:0 0;font-weight:400;">Август, 2025 г. [Август, 2025 г.]</span>
<span style="left:85.30px;top:333.00px;font-size:12px;color:#000;letter-spacing:0.355px;transform:scaleX(0.8800);transform-origin:0 0;font-weight:400;">М-29</span>
<span style="left:85.30px;top:349.00px;font-size:12px;color:#000;letter-spacing:0.278px;transform:scaleX(0.8800);transform-origin:0 0;font-weight:400;">РЕСУРСНЫЕ РАСЧЕТЫ</span>
<span style="left:85.30px;top:365.00px;font-size:12px;color:#000;letter-spacing:0.243px;transform:scaleX(0.8800);transform-origin:0 0;font-weight:400;">КС-3</span>
<span style="left:66.30px;top:381.00px;font-size:12px;color:#000;letter-spacing:0.026px;transform:scaleX(0.8800);transform-origin:0 0;font-weight:400;">ОБМЕН</span>
<span style="left:112.40px;top:381.00px;font-size:12px;color:#0000ff;letter-spacing:0.374px;transform:scaleX(0.8800);transform-origin:0 0;font-weight:400;">[1]</span>
<span style="left:66.30px;top:397.00px;font-size:12px;color:#000;letter-spacing:0.510px;transform:scaleX(0.8800);transform-origin:0 0;font-weight:400;">КОРЗИНА</span>
</body></html>
